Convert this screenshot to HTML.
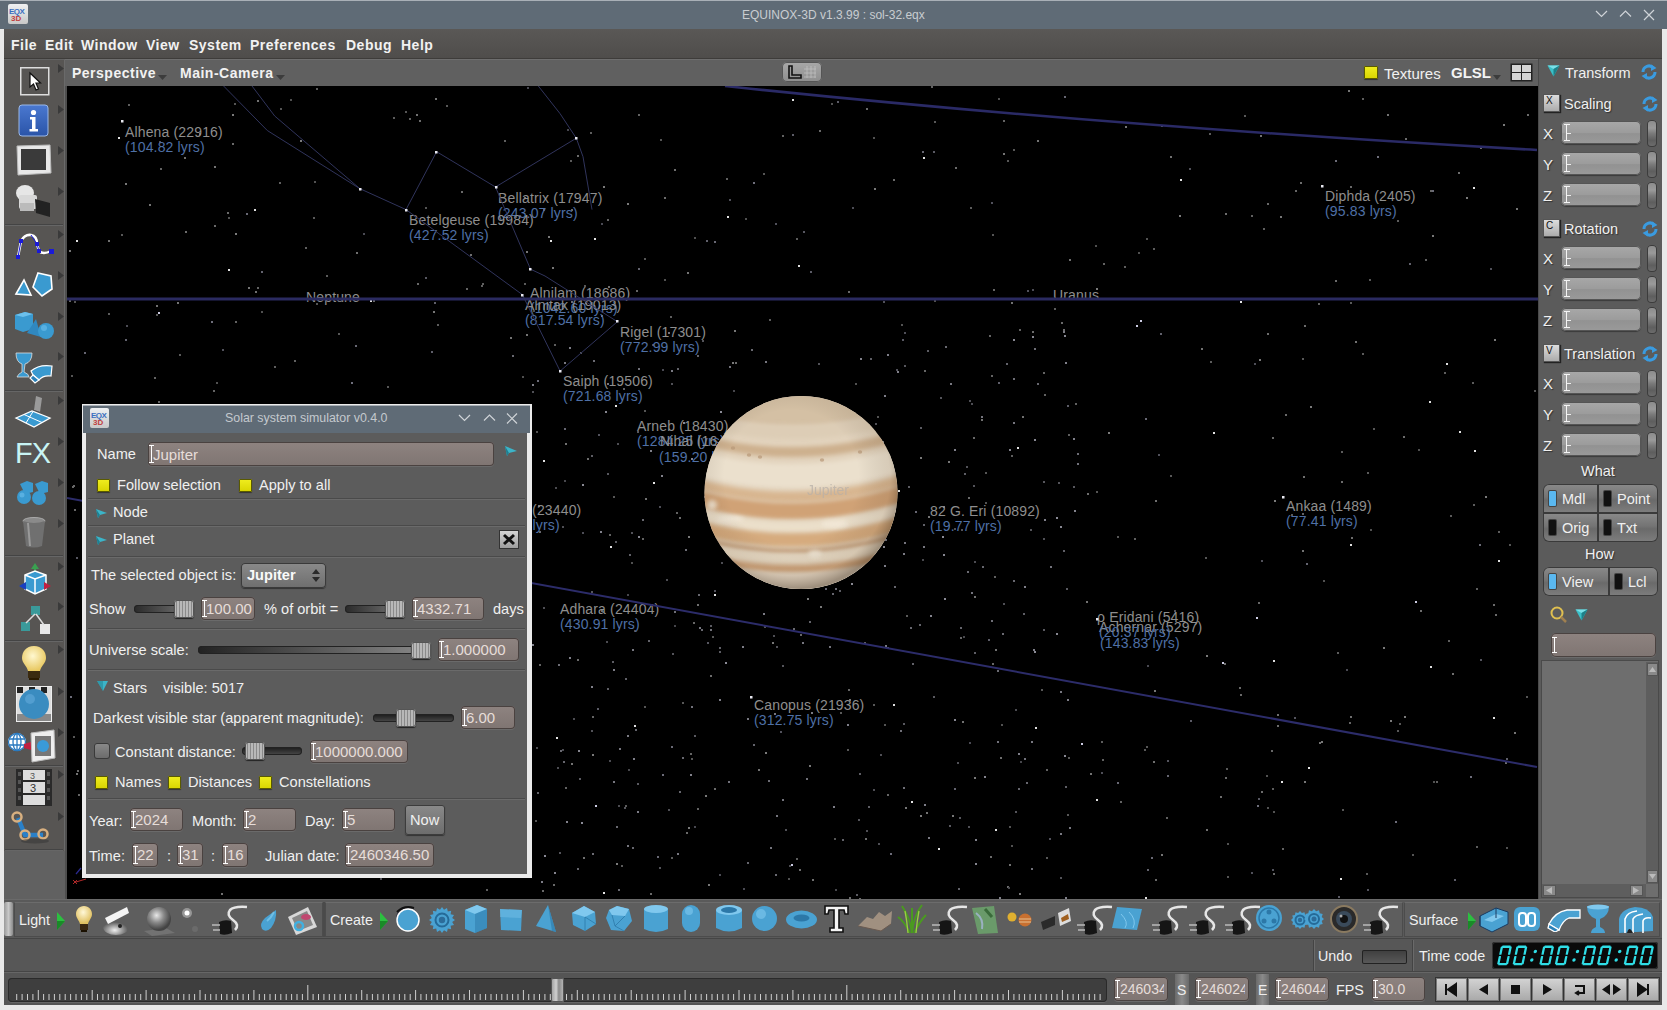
<!DOCTYPE html>
<html><head><meta charset="utf-8">
<style>
*{box-sizing:border-box}
html,body{margin:0;padding:0}
body{width:1667px;height:1010px;overflow:hidden;position:relative;background:#ebebeb;font-family:"Liberation Sans",sans-serif;color:#eee}
.a{position:absolute}
.t{position:absolute;white-space:nowrap;line-height:1}
.b{font-weight:bold}
.fld{position:absolute;border-radius:4px;background:linear-gradient(#8e8380,#7f7572);box-shadow:inset 0 0 0 1px #4a4240, 0 1px 0 #6a6a6a;color:#e6ddd9;font-size:15px;line-height:1}
.fld i{position:absolute;left:3px;top:3px;bottom:3px;width:5px;border-left:1px solid #fff;}
.fld i:before,.fld i:after{content:"";position:absolute;left:-3px;width:5px;height:1px;background:#fff;top:0}
.fld i:after{top:auto;bottom:0}
.fld span{position:absolute;left:5px;top:4px}
.rfld{position:absolute;border-radius:5px;background:linear-gradient(#a8a8a8,#9c9c9c 50%,#929292 55%,#9a9a9a);box-shadow:inset 0 0 0 1px #555,0 1px 1px #3a3a3a}
.rfld i{position:absolute;left:5px;top:3px;bottom:3px;border-left:1px solid #f4f4f4}
.rfld i:before,.rfld i:after{content:"";position:absolute;left:-3px;width:6px;height:1px;background:#f4f4f4;top:0}
.rfld i:after{top:auto;bottom:0}
.rfld b{position:absolute;left:6px;top:50%;width:4px;height:1px;background:#eee}
.knobv{position:absolute;border-radius:4px;background:linear-gradient(#8a8a8a,#9a9a9a 30%,#7a7a7a 50%,#5e5e5e 75%,#6e6e6e);box-shadow:inset 0 0 0 1px #3c3c3c}
.sep{position:absolute;height:1px;background:#4a4a4a;box-shadow:0 1px 0 #6a6a6a}
.cb{position:absolute;width:13px;height:13px;background:linear-gradient(#f0ee20,#d8d400);box-shadow:inset 0 0 0 1px #5a5a00,0 1px 1px #333;border-radius:1px}
.track{position:absolute;height:8px;border-radius:4px;background:linear-gradient(90deg,#2a2a2a,#7a7a7a);box-shadow:inset 0 0 0 1px #222}
.knob{position:absolute;border-radius:3px;background:repeating-linear-gradient(90deg,#b8b8b8 0 2px,#8a8a8a 2px 3px);box-shadow:inset 0 0 0 1px #555, 0 1px 1px #222}
.lbl{position:absolute;white-space:nowrap;line-height:1;font-size:14px;color:#8e8e8e;letter-spacing:0.15px}
.dst{color:#4f70a6}
.ico{position:absolute}
</style></head><body>

<!-- title bar -->
<div class="a" style="left:0;top:0;width:1667px;height:29px;background:#5f6b76;border-top:1px solid #a9b0b7"></div>
<div class="a" style="left:8px;top:4px;width:20px;height:20px;background:linear-gradient(#eef0f2,#c8c8c8);border-radius:2px"></div>
<div class="t" style="left:9px;top:8px;font-size:8px;font-weight:bold;color:#3a6fc0;letter-spacing:-0.5px">EQX</div>
<div class="t" style="left:11px;top:15px;font-size:8px;font-weight:bold;color:#c04040">3D</div>
<div class="t" style="left:742px;top:9px;font-size:12px;color:#c9cdd1">EQUINOX-3D v1.3.99 : sol-32.eqx</div>
<svg class="a" style="left:1590px;top:6px" width="72" height="18" viewBox="0 0 72 18" fill="none" stroke="#d0d4d8" stroke-width="1.2">
<path d="M6 5 L11.5 10.5 L17 5"/><path d="M30 10.5 L35.5 5 L41 10.5"/><path d="M54 4 L64 14 M64 4 L54 14"/>
</svg>
<!-- window frame -->
<div class="a" style="left:0;top:29px;width:4px;height:981px;background:#e9e9e9"></div>
<div class="a" style="left:1662px;top:29px;width:5px;height:981px;background:#e9e9e9"></div>
<div class="a" style="left:0;top:1005px;width:1667px;height:5px;background:#e9e9e9"></div>
<!-- menu bar -->
<div class="a" style="left:4px;top:29px;width:1658px;height:30px;background:linear-gradient(#5a5856,#4f4d4b);border-bottom:1px solid #3e3c3a"></div>
<div class="t b" style="left:11px;top:38px;font-size:14px;color:#f2f2f2;letter-spacing:0.5px;word-spacing:2px">File</div>
<div class="t b" style="left:45px;top:38px;font-size:14px;color:#f2f2f2;letter-spacing:0.5px">Edit</div>
<div class="t b" style="left:81px;top:38px;font-size:14px;color:#f2f2f2;letter-spacing:0.5px">Window</div>
<div class="t b" style="left:146px;top:38px;font-size:14px;color:#f2f2f2;letter-spacing:0.5px">View</div>
<div class="t b" style="left:189px;top:38px;font-size:14px;color:#f2f2f2;letter-spacing:0.5px">System</div>
<div class="t b" style="left:250px;top:38px;font-size:14px;color:#f2f2f2;letter-spacing:0.5px">Preferences</div>
<div class="t b" style="left:346px;top:38px;font-size:14px;color:#f2f2f2;letter-spacing:0.5px">Debug</div>
<div class="t b" style="left:401px;top:38px;font-size:14px;color:#f2f2f2;letter-spacing:0.5px">Help</div>
<!-- left toolbar bg -->
<div class="a" style="left:4px;top:59px;width:61px;height:841px;background:#575553;border-right:1px solid #6a6a6a;border-top:1px solid #626262"></div>
<!-- viewport header -->
<div class="a" style="left:65px;top:59px;width:1473px;height:27px;background:#606060;border-top:1px solid #6e6e6e"></div>
<div class="t b" style="left:72px;top:66px;font-size:14px;color:#f2f2f2;letter-spacing:0.5px">Perspective</div>
<svg class="a" style="left:158px;top:75px" width="9" height="6"><path d="M0 0H9L4.5 5Z" fill="#3c3c3c"/></svg>
<div class="t b" style="left:180px;top:66px;font-size:14px;color:#f2f2f2;letter-spacing:0.5px">Main-Camera</div>
<svg class="a" style="left:276px;top:75px" width="9" height="6"><path d="M0 0H9L4.5 5Z" fill="#3c3c3c"/></svg>
<div class="a" style="left:782px;top:62px;width:40px;height:20px;border-radius:5px;background:linear-gradient(#a8a8a8,#8e8e8e);box-shadow:inset 0 0 0 1px #555"></div>
<svg class="a" style="left:788px;top:65px" width="30" height="14"><path d="M1 1V13H13V10H4V1Z" fill="none" stroke="#111" stroke-width="1.6"/><g stroke="#c8c8c8" stroke-width="0.8" opacity="0.8"><path d="M16 4H28M16 8H28M16 12H28M19 1V13M23 1V13M27 1V13"/></g></svg>
<div class="cb" style="left:1364px;top:66px;width:14px;height:13px"></div>
<div class="t" style="left:1384px;top:66px;font-size:15px;color:#f0f0f0">Textures</div>
<div class="t b" style="left:1451px;top:65px;font-size:15px;color:#f4f4f4">GLSL</div>
<svg class="a" style="left:1493px;top:75px" width="8" height="5"><path d="M0 0H8L4 5Z" fill="#3c3c3c"/></svg>
<svg class="a" style="left:1510px;top:63px" width="23" height="19"><rect x="0.5" y="0.5" width="22" height="18" fill="#222"/><rect x="2" y="2" width="9" height="7" fill="#d4d4d4"/><rect x="12" y="2" width="9" height="7" fill="#d4d4d4"/><rect x="2" y="10" width="9" height="7" fill="#d4d4d4"/><rect x="12" y="10" width="9" height="7" fill="#d4d4d4"/></svg>
<!-- right panel bg -->
<div class="a" style="left:65px;top:86px;width:2px;height:813px;background:#4e4e4e"></div>
<div class="a" style="left:1538px;top:59px;width:124px;height:841px;background:#5b5b5b;border-left:1px solid #4a4a4a"></div>
<!-- bottom rows -->
<div class="a" style="left:4px;top:899px;width:1658px;height:40px;background:#5a5a5a;border-top:1px solid #6a6a6a;border-bottom:1px solid #454545"></div>
<div class="a" style="left:4px;top:939px;width:1658px;height:33px;background:#575757;border-bottom:1px solid #454545"></div>
<div class="a" style="left:4px;top:972px;width:1658px;height:33px;background:#555;border-top:1px solid #666"></div>

<div class="a" style="left:67px;top:86px;width:1471px;height:813px;background:#000;overflow:hidden">
<svg class="a" style="left:0;top:0" width="1471" height="813" viewBox="67 86 1471 813">
<rect x="543" y="209" width="2" height="2" fill="rgb(100,100,112)"/><rect x="855" y="383" width="2" height="2" fill="rgb(82,82,82)"/><rect x="122" y="439" width="2" height="2" fill="rgb(74,74,83)"/><rect x="691" y="758" width="2" height="2" fill="rgb(86,86,86)"/><rect x="990" y="856" width="2" height="2" fill="rgb(108,108,108)"/><rect x="1503" y="124" width="2" height="2" fill="rgb(122,122,122)"/><rect x="279" y="182" width="2" height="2" fill="rgb(95,95,95)"/><rect x="333" y="559" width="2" height="2" fill="rgb(111,111,111)"/><rect x="873" y="137" width="2" height="2" fill="rgb(82,82,82)"/><rect x="1068" y="434" width="2" height="2" fill="rgb(95,95,95)"/><rect x="734" y="330" width="2" height="2" fill="rgb(119,119,119)"/><rect x="426" y="553" width="2" height="2" fill="rgb(106,106,106)"/><rect x="1140" y="320" width="2" height="2" fill="rgb(205,205,228)"/><rect x="682" y="702" width="2" height="2" fill="rgb(87,87,87)"/><rect x="125" y="629" width="2" height="2" fill="rgb(118,118,118)"/><rect x="1355" y="341" width="2" height="2" fill="rgb(114,114,114)"/><rect x="920" y="457" width="2" height="2" fill="rgb(121,121,121)"/><rect x="764" y="626" width="2" height="2" fill="rgb(83,83,83)"/><rect x="1019" y="893" width="2" height="2" fill="rgb(121,121,121)"/><rect x="634" y="630" width="2" height="2" fill="rgb(81,81,81)"/><rect x="314" y="181" width="2" height="2" fill="rgb(82,82,82)"/><rect x="257" y="287" width="2" height="2" fill="rgb(99,99,99)"/><rect x="186" y="451" width="2" height="2" fill="rgb(107,107,107)"/><rect x="1272" y="788" width="2" height="2" fill="rgb(93,93,93)"/><rect x="595" y="805" width="2" height="2" fill="rgb(204,204,227)"/><rect x="326" y="275" width="2" height="2" fill="rgb(91,91,91)"/><rect x="934" y="300" width="2" height="2" fill="rgb(80,80,80)"/><rect x="610" y="546" width="2" height="2" fill="rgb(226,226,226)"/><rect x="825" y="588" width="2" height="2" fill="rgb(101,101,113)"/><rect x="1390" y="720" width="2" height="2" fill="rgb(123,123,123)"/><rect x="644" y="410" width="2" height="2" fill="rgb(85,85,85)"/><rect x="159" y="141" width="2" height="2" fill="rgb(81,81,90)"/><rect x="567" y="129" width="2" height="2" fill="rgb(72,72,80)"/><rect x="216" y="382" width="2" height="2" fill="rgb(81,81,81)"/><rect x="970" y="207" width="2" height="2" fill="rgb(92,92,92)"/><rect x="603" y="186" width="2" height="2" fill="rgb(122,122,122)"/><rect x="752" y="479" width="2" height="2" fill="rgb(75,75,84)"/><rect x="571" y="301" width="2" height="2" fill="rgb(108,108,121)"/><rect x="101" y="859" width="2" height="2" fill="rgb(95,95,106)"/><rect x="866" y="108" width="2" height="2" fill="rgb(106,106,106)"/><rect x="1337" y="652" width="2" height="2" fill="rgb(93,93,93)"/><rect x="313" y="714" width="2" height="2" fill="rgb(106,106,106)"/><rect x="552" y="267" width="2" height="2" fill="rgb(120,120,120)"/><rect x="1321" y="741" width="2" height="2" fill="rgb(120,120,120)"/><rect x="401" y="507" width="2" height="2" fill="rgb(87,87,97)"/><rect x="108" y="313" width="2" height="2" fill="rgb(92,92,92)"/><rect x="1474" y="450" width="2" height="2" fill="rgb(225,225,225)"/><rect x="1472" y="382" width="2" height="2" fill="rgb(91,91,91)"/><rect x="356" y="252" width="2" height="2" fill="rgb(111,111,111)"/><rect x="1303" y="476" width="2" height="2" fill="rgb(112,112,112)"/><rect x="192" y="623" width="2" height="2" fill="rgb(223,223,223)"/><rect x="1170" y="475" width="2" height="2" fill="rgb(88,88,88)"/><rect x="556" y="737" width="2" height="2" fill="rgb(228,228,228)"/><rect x="657" y="856" width="2" height="2" fill="rgb(104,104,116)"/><rect x="254" y="209" width="2" height="2" fill="rgb(223,223,223)"/><rect x="282" y="758" width="2" height="2" fill="rgb(228,228,228)"/><rect x="582" y="532" width="2" height="2" fill="rgb(77,77,86)"/><rect x="1495" y="614" width="2" height="2" fill="rgb(106,106,106)"/><rect x="705" y="795" width="2" height="2" fill="rgb(121,121,121)"/><rect x="437" y="324" width="2" height="2" fill="rgb(92,92,92)"/><rect x="449" y="427" width="2" height="2" fill="rgb(86,86,86)"/><rect x="587" y="458" width="2" height="2" fill="rgb(109,109,109)"/><rect x="686" y="832" width="2" height="2" fill="rgb(105,105,105)"/><rect x="837" y="101" width="2" height="2" fill="rgb(91,91,102)"/><rect x="73" y="736" width="2" height="2" fill="rgb(88,88,88)"/><rect x="1134" y="538" width="2" height="2" fill="rgb(96,96,96)"/><rect x="884" y="724" width="2" height="2" fill="rgb(85,85,85)"/><rect x="433" y="311" width="2" height="2" fill="rgb(118,118,118)"/><rect x="893" y="704" width="2" height="2" fill="rgb(223,223,223)"/><rect x="968" y="497" width="2" height="2" fill="rgb(105,105,105)"/><rect x="732" y="520" width="2" height="2" fill="rgb(103,103,103)"/><rect x="1096" y="799" width="2" height="2" fill="rgb(225,225,225)"/><rect x="890" y="853" width="2" height="2" fill="rgb(108,108,121)"/><rect x="246" y="445" width="2" height="2" fill="rgb(83,83,83)"/><rect x="175" y="630" width="2" height="2" fill="rgb(119,119,119)"/><rect x="294" y="668" width="2" height="2" fill="rgb(101,101,113)"/><rect x="1366" y="873" width="2" height="2" fill="rgb(90,90,90)"/><rect x="653" y="482" width="2" height="2" fill="rgb(229,229,229)"/><rect x="305" y="437" width="2" height="2" fill="rgb(105,105,105)"/><rect x="355" y="345" width="2" height="2" fill="rgb(104,104,116)"/><rect x="882" y="444" width="2" height="2" fill="rgb(80,80,80)"/><rect x="985" y="502" width="2" height="2" fill="rgb(83,83,83)"/><rect x="1227" y="876" width="2" height="2" fill="rgb(85,85,85)"/><rect x="125" y="719" width="2" height="2" fill="rgb(83,83,93)"/><rect x="688" y="827" width="2" height="2" fill="rgb(120,120,120)"/><rect x="287" y="833" width="2" height="2" fill="rgb(108,108,108)"/><rect x="199" y="133" width="2" height="2" fill="rgb(114,114,114)"/><rect x="174" y="849" width="2" height="2" fill="rgb(111,111,111)"/><rect x="190" y="782" width="2" height="2" fill="rgb(83,83,83)"/><rect x="735" y="362" width="2" height="2" fill="rgb(107,107,107)"/><rect x="461" y="191" width="2" height="2" fill="rgb(106,106,106)"/><rect x="228" y="217" width="2" height="2" fill="rgb(82,82,82)"/><rect x="526" y="334" width="2" height="2" fill="rgb(117,117,117)"/><rect x="803" y="231" width="2" height="2" fill="rgb(87,87,97)"/><rect x="435" y="98" width="2" height="2" fill="rgb(116,116,116)"/><rect x="346" y="472" width="2" height="2" fill="rgb(202,202,225)"/><rect x="1272" y="437" width="2" height="2" fill="rgb(104,104,104)"/><rect x="645" y="498" width="2" height="2" fill="rgb(114,114,114)"/><rect x="571" y="763" width="2" height="2" fill="rgb(115,115,115)"/><rect x="662" y="369" width="2" height="2" fill="rgb(73,73,82)"/><rect x="171" y="688" width="2" height="2" fill="rgb(82,82,92)"/><rect x="191" y="770" width="2" height="2" fill="rgb(123,123,123)"/><rect x="482" y="283" width="2" height="2" fill="rgb(94,94,94)"/><rect x="299" y="448" width="2" height="2" fill="rgb(93,93,93)"/><rect x="1498" y="531" width="2" height="2" fill="rgb(92,92,92)"/><rect x="522" y="376" width="2" height="2" fill="rgb(80,80,80)"/><rect x="765" y="495" width="2" height="2" fill="rgb(90,90,90)"/><rect x="74" y="301" width="2" height="2" fill="rgb(84,84,84)"/><rect x="128" y="104" width="2" height="2" fill="rgb(95,95,95)"/><rect x="928" y="516" width="2" height="2" fill="rgb(117,117,117)"/><rect x="1120" y="801" width="2" height="2" fill="rgb(99,99,99)"/><rect x="1516" y="208" width="2" height="2" fill="rgb(116,116,116)"/><rect x="131" y="765" width="2" height="2" fill="rgb(124,124,124)"/><rect x="1146" y="746" width="2" height="2" fill="rgb(86,86,86)"/><rect x="809" y="765" width="2" height="2" fill="rgb(120,120,120)"/><rect x="926" y="812" width="2" height="2" fill="rgb(114,114,114)"/><rect x="405" y="111" width="2" height="2" fill="rgb(86,86,86)"/><rect x="221" y="766" width="2" height="2" fill="rgb(107,107,107)"/><rect x="988" y="639" width="2" height="2" fill="rgb(93,93,104)"/><rect x="1240" y="694" width="2" height="2" fill="rgb(105,105,105)"/><rect x="1037" y="140" width="2" height="2" fill="rgb(116,116,116)"/><rect x="177" y="302" width="2" height="2" fill="rgb(116,116,116)"/><rect x="1155" y="879" width="2" height="2" fill="rgb(104,104,104)"/><rect x="772" y="642" width="2" height="2" fill="rgb(118,118,118)"/><rect x="1013" y="149" width="2" height="2" fill="rgb(87,87,87)"/><rect x="1160" y="333" width="2" height="2" fill="rgb(97,97,108)"/><rect x="156" y="305" width="2" height="2" fill="rgb(113,113,113)"/><rect x="1061" y="322" width="2" height="2" fill="rgb(105,105,105)"/><rect x="753" y="182" width="2" height="2" fill="rgb(111,111,124)"/><rect x="1506" y="847" width="2" height="2" fill="rgb(80,80,80)"/><rect x="1273" y="873" width="2" height="2" fill="rgb(102,102,102)"/><rect x="376" y="855" width="2" height="2" fill="rgb(90,90,90)"/><rect x="276" y="512" width="2" height="2" fill="rgb(203,203,226)"/><rect x="1274" y="500" width="2" height="2" fill="rgb(124,124,124)"/><rect x="407" y="816" width="2" height="2" fill="rgb(93,93,104)"/><rect x="72" y="486" width="2" height="2" fill="rgb(102,102,102)"/><rect x="274" y="366" width="2" height="2" fill="rgb(95,95,95)"/><rect x="70" y="696" width="2" height="2" fill="rgb(108,108,121)"/><rect x="1430" y="666" width="2" height="2" fill="rgb(223,223,223)"/><rect x="615" y="405" width="2" height="2" fill="rgb(229,229,229)"/><rect x="598" y="434" width="2" height="2" fill="rgb(83,83,93)"/><rect x="217" y="765" width="2" height="2" fill="rgb(94,94,94)"/><rect x="434" y="302" width="2" height="2" fill="rgb(94,94,105)"/><rect x="616" y="863" width="2" height="2" fill="rgb(124,124,124)"/><rect x="995" y="829" width="2" height="2" fill="rgb(225,225,225)"/><rect x="1125" y="126" width="2" height="2" fill="rgb(116,116,116)"/><rect x="1174" y="610" width="2" height="2" fill="rgb(84,84,94)"/><rect x="1430" y="190" width="2" height="2" fill="rgb(103,103,103)"/><rect x="505" y="687" width="2" height="2" fill="rgb(228,228,228)"/><rect x="1032" y="331" width="2" height="2" fill="rgb(107,107,107)"/><rect x="313" y="217" width="2" height="2" fill="rgb(90,90,90)"/><rect x="798" y="265" width="2" height="2" fill="rgb(223,223,223)"/><rect x="729" y="199" width="2" height="2" fill="rgb(80,80,89)"/><rect x="570" y="160" width="2" height="2" fill="rgb(91,91,91)"/><rect x="905" y="807" width="2" height="2" fill="rgb(117,117,117)"/><rect x="676" y="512" width="2" height="2" fill="rgb(98,98,98)"/><rect x="158" y="312" width="2" height="2" fill="rgb(204,204,227)"/><rect x="807" y="598" width="2" height="2" fill="rgb(123,123,123)"/><rect x="466" y="288" width="2" height="2" fill="rgb(99,99,99)"/><rect x="1470" y="776" width="2" height="2" fill="rgb(110,110,123)"/><rect x="114" y="663" width="2" height="2" fill="rgb(124,124,124)"/><rect x="931" y="86" width="2" height="2" fill="rgb(99,99,99)"/><rect x="1281" y="781" width="2" height="2" fill="rgb(228,228,228)"/><rect x="227" y="212" width="2" height="2" fill="rgb(106,106,106)"/><rect x="1452" y="673" width="2" height="2" fill="rgb(112,112,112)"/><rect x="740" y="534" width="2" height="2" fill="rgb(81,81,81)"/><rect x="409" y="834" width="2" height="2" fill="rgb(112,112,112)"/><rect x="255" y="291" width="2" height="2" fill="rgb(111,111,111)"/><rect x="232" y="143" width="2" height="2" fill="rgb(106,106,106)"/><rect x="638" y="268" width="2" height="2" fill="rgb(99,99,110)"/><rect x="511" y="461" width="2" height="2" fill="rgb(227,227,227)"/><rect x="1367" y="472" width="2" height="2" fill="rgb(91,91,91)"/><rect x="1480" y="659" width="2" height="2" fill="rgb(85,85,95)"/><rect x="800" y="634" width="2" height="2" fill="rgb(101,101,101)"/><rect x="1049" y="838" width="2" height="2" fill="rgb(81,81,91)"/><rect x="564" y="428" width="2" height="2" fill="rgb(102,102,114)"/><rect x="1239" y="687" width="2" height="2" fill="rgb(105,105,105)"/><rect x="1494" y="339" width="2" height="2" fill="rgb(121,121,121)"/><rect x="393" y="704" width="2" height="2" fill="rgb(94,94,94)"/><rect x="796" y="238" width="2" height="2" fill="rgb(91,91,91)"/><rect x="1046" y="857" width="2" height="2" fill="rgb(87,87,87)"/><rect x="380" y="878" width="2" height="2" fill="rgb(78,78,87)"/><rect x="155" y="406" width="2" height="2" fill="rgb(124,124,124)"/><rect x="1145" y="897" width="2" height="2" fill="rgb(225,225,225)"/><rect x="340" y="847" width="2" height="2" fill="rgb(105,105,117)"/><rect x="1044" y="394" width="2" height="2" fill="rgb(98,98,98)"/><rect x="316" y="88" width="2" height="2" fill="rgb(93,93,93)"/><rect x="1473" y="187" width="2" height="2" fill="rgb(227,227,227)"/><rect x="592" y="754" width="2" height="2" fill="rgb(121,121,121)"/><rect x="139" y="471" width="2" height="2" fill="rgb(98,98,98)"/><rect x="351" y="382" width="2" height="2" fill="rgb(111,111,124)"/><rect x="671" y="746" width="2" height="2" fill="rgb(106,106,118)"/><rect x="118" y="137" width="2" height="2" fill="rgb(224,224,224)"/><rect x="1166" y="817" width="2" height="2" fill="rgb(96,96,96)"/><rect x="1476" y="588" width="2" height="2" fill="rgb(93,93,93)"/><rect x="533" y="310" width="2" height="2" fill="rgb(80,80,80)"/><rect x="1415" y="601" width="2" height="2" fill="rgb(203,203,226)"/><rect x="411" y="472" width="2" height="2" fill="rgb(226,226,226)"/><rect x="636" y="290" width="2" height="2" fill="rgb(101,101,101)"/><rect x="1432" y="235" width="2" height="2" fill="rgb(120,120,120)"/><rect x="1277" y="714" width="2" height="2" fill="rgb(110,110,110)"/><rect x="537" y="380" width="2" height="2" fill="rgb(107,107,119)"/><rect x="357" y="698" width="2" height="2" fill="rgb(82,82,92)"/><rect x="117" y="535" width="2" height="2" fill="rgb(96,96,96)"/><rect x="1367" y="889" width="2" height="2" fill="rgb(83,83,93)"/><rect x="209" y="491" width="2" height="2" fill="rgb(115,115,115)"/><rect x="412" y="425" width="2" height="2" fill="rgb(111,111,111)"/><rect x="1167" y="775" width="2" height="2" fill="rgb(101,101,113)"/><rect x="1304" y="325" width="2" height="2" fill="rgb(108,108,108)"/><rect x="1153" y="248" width="2" height="2" fill="rgb(92,92,92)"/><rect x="293" y="805" width="2" height="2" fill="rgb(108,108,108)"/><rect x="650" y="893" width="2" height="2" fill="rgb(105,105,105)"/><rect x="1256" y="617" width="2" height="2" fill="rgb(206,206,229)"/><rect x="765" y="752" width="2" height="2" fill="rgb(122,122,122)"/><rect x="126" y="325" width="2" height="2" fill="rgb(76,76,85)"/><rect x="1498" y="560" width="2" height="2" fill="rgb(225,225,225)"/><rect x="1341" y="451" width="2" height="2" fill="rgb(92,92,92)"/><rect x="1458" y="172" width="2" height="2" fill="rgb(109,109,109)"/><rect x="387" y="386" width="2" height="2" fill="rgb(87,87,87)"/><rect x="442" y="573" width="2" height="2" fill="rgb(112,112,112)"/><rect x="84" y="352" width="2" height="2" fill="rgb(101,101,113)"/><rect x="526" y="251" width="2" height="2" fill="rgb(119,119,119)"/><rect x="160" y="168" width="2" height="2" fill="rgb(99,99,99)"/><rect x="1007" y="160" width="2" height="2" fill="rgb(88,88,88)"/><rect x="670" y="316" width="2" height="2" fill="rgb(95,95,95)"/><rect x="526" y="547" width="2" height="2" fill="rgb(97,97,97)"/><rect x="1338" y="896" width="2" height="2" fill="rgb(88,88,98)"/><rect x="1138" y="252" width="2" height="2" fill="rgb(80,80,80)"/><rect x="690" y="753" width="2" height="2" fill="rgb(100,100,100)"/><rect x="745" y="218" width="2" height="2" fill="rgb(80,80,80)"/><rect x="1009" y="826" width="2" height="2" fill="rgb(84,84,84)"/><rect x="613" y="496" width="2" height="2" fill="rgb(87,87,87)"/><rect x="834" y="838" width="2" height="2" fill="rgb(85,85,85)"/><rect x="1251" y="872" width="2" height="2" fill="rgb(80,80,89)"/><rect x="1454" y="879" width="2" height="2" fill="rgb(93,93,104)"/><rect x="1429" y="401" width="2" height="2" fill="rgb(223,223,223)"/><rect x="1280" y="216" width="2" height="2" fill="rgb(119,119,119)"/><rect x="662" y="774" width="2" height="2" fill="rgb(108,108,121)"/><rect x="388" y="411" width="2" height="2" fill="rgb(105,105,105)"/><rect x="248" y="287" width="2" height="2" fill="rgb(116,116,116)"/><rect x="127" y="543" width="2" height="2" fill="rgb(105,105,117)"/><rect x="1300" y="182" width="2" height="2" fill="rgb(109,109,109)"/><rect x="989" y="335" width="2" height="2" fill="rgb(101,101,101)"/><rect x="693" y="622" width="2" height="2" fill="rgb(102,102,102)"/><rect x="101" y="589" width="2" height="2" fill="rgb(104,104,104)"/><rect x="1190" y="720" width="2" height="2" fill="rgb(91,91,102)"/><rect x="763" y="173" width="2" height="2" fill="rgb(86,86,86)"/><rect x="202" y="445" width="2" height="2" fill="rgb(94,94,105)"/><rect x="1003" y="153" width="2" height="2" fill="rgb(116,116,116)"/><rect x="819" y="130" width="2" height="2" fill="rgb(105,105,105)"/><rect x="1466" y="197" width="2" height="2" fill="rgb(122,122,122)"/><rect x="1144" y="749" width="2" height="2" fill="rgb(89,89,89)"/><rect x="791" y="864" width="2" height="2" fill="rgb(201,201,224)"/><rect x="1227" y="843" width="2" height="2" fill="rgb(83,83,83)"/><rect x="1179" y="215" width="2" height="2" fill="rgb(124,124,124)"/><rect x="1267" y="203" width="2" height="2" fill="rgb(105,105,105)"/><rect x="373" y="300" width="2" height="2" fill="rgb(105,105,105)"/><rect x="121" y="234" width="2" height="2" fill="rgb(88,88,88)"/><rect x="1067" y="814" width="2" height="2" fill="rgb(88,88,88)"/><rect x="236" y="517" width="2" height="2" fill="rgb(111,111,111)"/><rect x="1351" y="537" width="2" height="2" fill="rgb(109,109,109)"/><rect x="221" y="893" width="2" height="2" fill="rgb(111,111,111)"/><rect x="1240" y="301" width="2" height="2" fill="rgb(229,229,229)"/><rect x="597" y="708" width="2" height="2" fill="rgb(91,91,102)"/><rect x="1161" y="125" width="2" height="2" fill="rgb(120,120,120)"/><rect x="1007" y="886" width="2" height="2" fill="rgb(109,109,109)"/><rect x="527" y="87" width="2" height="2" fill="rgb(72,72,81)"/><rect x="973" y="437" width="2" height="2" fill="rgb(105,105,105)"/><rect x="261" y="271" width="2" height="2" fill="rgb(100,100,112)"/><rect x="71" y="375" width="2" height="2" fill="rgb(85,85,85)"/><rect x="397" y="560" width="2" height="2" fill="rgb(109,109,109)"/><rect x="985" y="472" width="2" height="2" fill="rgb(86,86,86)"/><rect x="425" y="207" width="2" height="2" fill="rgb(84,84,84)"/><rect x="1349" y="722" width="2" height="2" fill="rgb(100,100,100)"/><rect x="84" y="610" width="2" height="2" fill="rgb(108,108,108)"/><rect x="1017" y="447" width="2" height="2" fill="rgb(225,225,225)"/><rect x="433" y="821" width="2" height="2" fill="rgb(82,82,82)"/><rect x="664" y="279" width="2" height="2" fill="rgb(82,82,82)"/><rect x="85" y="534" width="2" height="2" fill="rgb(202,202,225)"/><rect x="360" y="580" width="2" height="2" fill="rgb(105,105,105)"/><rect x="1263" y="228" width="2" height="2" fill="rgb(95,95,95)"/><rect x="138" y="809" width="2" height="2" fill="rgb(119,119,119)"/><rect x="76" y="773" width="2" height="2" fill="rgb(117,117,117)"/><rect x="1158" y="454" width="2" height="2" fill="rgb(81,81,91)"/><rect x="409" y="118" width="2" height="2" fill="rgb(96,96,96)"/><rect x="1090" y="773" width="2" height="2" fill="rgb(115,115,115)"/><rect x="882" y="441" width="2" height="2" fill="rgb(119,119,119)"/><rect x="457" y="608" width="2" height="2" fill="rgb(227,227,227)"/><rect x="1362" y="98" width="2" height="2" fill="rgb(93,93,93)"/><rect x="1161" y="854" width="2" height="2" fill="rgb(117,117,117)"/><rect x="1362" y="353" width="2" height="2" fill="rgb(91,91,91)"/><rect x="995" y="649" width="2" height="2" fill="rgb(113,113,113)"/><rect x="758" y="769" width="2" height="2" fill="rgb(114,114,114)"/><rect x="710" y="675" width="2" height="2" fill="rgb(108,108,108)"/><rect x="379" y="592" width="2" height="2" fill="rgb(83,83,83)"/><rect x="280" y="108" width="2" height="2" fill="rgb(85,85,85)"/><rect x="574" y="201" width="2" height="2" fill="rgb(72,72,81)"/><rect x="1086" y="601" width="2" height="2" fill="rgb(114,114,114)"/><rect x="164" y="566" width="2" height="2" fill="rgb(98,98,98)"/><rect x="1273" y="811" width="2" height="2" fill="rgb(83,83,83)"/><rect x="1412" y="854" width="2" height="2" fill="rgb(85,85,85)"/><rect x="232" y="114" width="2" height="2" fill="rgb(122,122,122)"/><rect x="1000" y="757" width="2" height="2" fill="rgb(111,111,111)"/><rect x="214" y="166" width="2" height="2" fill="rgb(117,117,117)"/><rect x="536" y="431" width="2" height="2" fill="rgb(81,81,81)"/><rect x="483" y="668" width="2" height="2" fill="rgb(98,98,98)"/><rect x="1485" y="496" width="2" height="2" fill="rgb(122,122,122)"/><rect x="113" y="422" width="2" height="2" fill="rgb(101,101,101)"/><rect x="577" y="659" width="2" height="2" fill="rgb(106,106,106)"/><rect x="1335" y="160" width="2" height="2" fill="rgb(108,108,120)"/><rect x="69" y="250" width="2" height="2" fill="rgb(118,118,118)"/><rect x="73" y="485" width="2" height="2" fill="rgb(104,104,104)"/><rect x="338" y="488" width="2" height="2" fill="rgb(97,97,97)"/><rect x="450" y="853" width="2" height="2" fill="rgb(94,94,94)"/><rect x="1096" y="491" width="2" height="2" fill="rgb(85,85,85)"/><rect x="186" y="727" width="2" height="2" fill="rgb(114,114,114)"/><rect x="991" y="375" width="2" height="2" fill="rgb(100,100,100)"/><rect x="1377" y="156" width="2" height="2" fill="rgb(111,111,124)"/><rect x="370" y="300" width="2" height="2" fill="rgb(223,223,223)"/><rect x="625" y="805" width="2" height="2" fill="rgb(91,91,91)"/><rect x="849" y="699" width="2" height="2" fill="rgb(117,117,117)"/><rect x="580" y="352" width="2" height="2" fill="rgb(87,87,87)"/><rect x="1041" y="689" width="2" height="2" fill="rgb(88,88,88)"/><rect x="1205" y="557" width="2" height="2" fill="rgb(86,86,86)"/><rect x="1369" y="279" width="2" height="2" fill="rgb(89,89,89)"/><rect x="1101" y="772" width="2" height="2" fill="rgb(78,78,87)"/><rect x="431" y="351" width="2" height="2" fill="rgb(95,95,106)"/><rect x="550" y="240" width="2" height="2" fill="rgb(228,228,228)"/><rect x="217" y="868" width="2" height="2" fill="rgb(85,85,85)"/><rect x="1514" y="732" width="2" height="2" fill="rgb(116,116,116)"/><rect x="356" y="605" width="2" height="2" fill="rgb(85,85,85)"/><rect x="638" y="114" width="2" height="2" fill="rgb(99,99,99)"/><rect x="1087" y="493" width="2" height="2" fill="rgb(111,111,111)"/><rect x="276" y="577" width="2" height="2" fill="rgb(100,100,100)"/><rect x="1403" y="436" width="2" height="2" fill="rgb(108,108,108)"/><rect x="687" y="272" width="2" height="2" fill="rgb(116,116,116)"/><rect x="1206" y="655" width="2" height="2" fill="rgb(122,122,122)"/><rect x="1011" y="455" width="2" height="2" fill="rgb(95,95,95)"/><rect x="211" y="427" width="2" height="2" fill="rgb(119,119,119)"/><rect x="993" y="289" width="2" height="2" fill="rgb(101,101,101)"/><rect x="981" y="419" width="2" height="2" fill="rgb(113,113,113)"/><rect x="336" y="618" width="2" height="2" fill="rgb(118,118,118)"/><rect x="788" y="878" width="2" height="2" fill="rgb(81,81,81)"/><rect x="304" y="722" width="2" height="2" fill="rgb(225,225,225)"/><rect x="216" y="553" width="2" height="2" fill="rgb(107,107,107)"/><rect x="820" y="606" width="2" height="2" fill="rgb(121,121,121)"/><rect x="671" y="857" width="2" height="2" fill="rgb(90,90,90)"/><rect x="644" y="706" width="2" height="2" fill="rgb(86,86,86)"/><rect x="590" y="132" width="2" height="2" fill="rgb(93,93,93)"/><rect x="87" y="426" width="2" height="2" fill="rgb(101,101,101)"/><rect x="585" y="302" width="2" height="2" fill="rgb(91,91,91)"/><rect x="1450" y="515" width="2" height="2" fill="rgb(90,90,90)"/><rect x="644" y="258" width="2" height="2" fill="rgb(86,86,86)"/><rect x="1258" y="602" width="2" height="2" fill="rgb(103,103,103)"/><rect x="399" y="870" width="2" height="2" fill="rgb(97,97,97)"/><rect x="1271" y="750" width="2" height="2" fill="rgb(103,103,103)"/><rect x="874" y="188" width="2" height="2" fill="rgb(121,121,121)"/><rect x="1318" y="303" width="2" height="2" fill="rgb(98,98,98)"/><rect x="694" y="237" width="2" height="2" fill="rgb(80,80,80)"/><rect x="481" y="285" width="2" height="2" fill="rgb(95,95,95)"/><rect x="697" y="604" width="2" height="2" fill="rgb(112,112,112)"/><rect x="1433" y="781" width="2" height="2" fill="rgb(82,82,82)"/><rect x="1399" y="723" width="2" height="2" fill="rgb(87,87,87)"/><rect x="998" y="98" width="2" height="2" fill="rgb(80,80,80)"/><rect x="1032" y="289" width="2" height="2" fill="rgb(76,76,85)"/><rect x="411" y="717" width="2" height="2" fill="rgb(87,87,97)"/><rect x="1397" y="730" width="2" height="2" fill="rgb(88,88,88)"/><rect x="962" y="721" width="2" height="2" fill="rgb(113,113,113)"/><rect x="1226" y="768" width="2" height="2" fill="rgb(89,89,89)"/><rect x="848" y="689" width="2" height="2" fill="rgb(101,101,101)"/><rect x="883" y="301" width="2" height="2" fill="rgb(81,81,91)"/><rect x="792" y="134" width="2" height="2" fill="rgb(92,92,103)"/><rect x="790" y="491" width="2" height="2" fill="rgb(106,106,106)"/><rect x="77" y="770" width="2" height="2" fill="rgb(103,103,103)"/><rect x="1046" y="769" width="2" height="2" fill="rgb(98,98,98)"/><rect x="1480" y="147" width="2" height="2" fill="rgb(111,111,111)"/><rect x="109" y="582" width="2" height="2" fill="rgb(114,114,114)"/><rect x="553" y="884" width="2" height="2" fill="rgb(105,105,105)"/><rect x="1387" y="114" width="2" height="2" fill="rgb(115,115,115)"/><rect x="565" y="787" width="2" height="2" fill="rgb(98,98,98)"/><rect x="840" y="712" width="2" height="2" fill="rgb(90,90,90)"/><rect x="688" y="536" width="2" height="2" fill="rgb(121,121,121)"/><rect x="1285" y="414" width="2" height="2" fill="rgb(105,105,105)"/><rect x="812" y="879" width="2" height="2" fill="rgb(112,112,112)"/><rect x="554" y="344" width="2" height="2" fill="rgb(94,94,94)"/><rect x="1001" y="724" width="2" height="2" fill="rgb(82,82,82)"/><rect x="1370" y="529" width="2" height="2" fill="rgb(82,82,82)"/><rect x="76" y="240" width="2" height="2" fill="rgb(224,224,224)"/><rect x="1035" y="727" width="2" height="2" fill="rgb(223,223,223)"/><rect x="974" y="596" width="2" height="2" fill="rgb(114,114,114)"/><rect x="1069" y="259" width="2" height="2" fill="rgb(113,113,113)"/><rect x="1189" y="168" width="2" height="2" fill="rgb(80,80,89)"/><rect x="1206" y="829" width="2" height="2" fill="rgb(112,112,112)"/><rect x="1277" y="725" width="2" height="2" fill="rgb(108,108,108)"/><rect x="511" y="429" width="2" height="2" fill="rgb(95,95,95)"/><rect x="1011" y="845" width="2" height="2" fill="rgb(82,82,82)"/><rect x="125" y="183" width="2" height="2" fill="rgb(120,120,120)"/><rect x="1418" y="449" width="2" height="2" fill="rgb(80,80,80)"/><rect x="938" y="848" width="2" height="2" fill="rgb(228,228,228)"/><rect x="674" y="169" width="2" height="2" fill="rgb(112,112,112)"/><rect x="290" y="99" width="2" height="2" fill="rgb(80,80,80)"/><rect x="246" y="872" width="2" height="2" fill="rgb(84,84,84)"/><rect x="257" y="100" width="2" height="2" fill="rgb(115,115,115)"/><rect x="1146" y="238" width="2" height="2" fill="rgb(82,82,82)"/><rect x="1117" y="782" width="2" height="2" fill="rgb(104,104,116)"/><rect x="992" y="663" width="2" height="2" fill="rgb(103,103,103)"/><rect x="441" y="870" width="2" height="2" fill="rgb(103,103,115)"/><rect x="89" y="615" width="2" height="2" fill="rgb(108,108,120)"/><rect x="525" y="679" width="2" height="2" fill="rgb(88,88,88)"/><rect x="782" y="135" width="2" height="2" fill="rgb(98,98,98)"/><rect x="712" y="636" width="2" height="2" fill="rgb(87,87,87)"/><rect x="601" y="610" width="2" height="2" fill="rgb(111,111,111)"/><rect x="634" y="725" width="2" height="2" fill="rgb(226,226,226)"/><rect x="901" y="324" width="2" height="2" fill="rgb(83,83,83)"/><rect x="1102" y="759" width="2" height="2" fill="rgb(96,96,96)"/><rect x="1505" y="762" width="2" height="2" fill="rgb(110,110,110)"/><rect x="697" y="808" width="2" height="2" fill="rgb(98,98,98)"/><rect x="952" y="815" width="2" height="2" fill="rgb(120,120,120)"/><rect x="69" y="300" width="2" height="2" fill="rgb(101,101,101)"/><rect x="1267" y="807" width="2" height="2" fill="rgb(82,82,82)"/><rect x="1261" y="791" width="2" height="2" fill="rgb(108,108,108)"/><rect x="1319" y="742" width="2" height="2" fill="rgb(114,114,114)"/><rect x="577" y="155" width="2" height="2" fill="rgb(107,107,107)"/><rect x="362" y="696" width="2" height="2" fill="rgb(225,225,225)"/><rect x="960" y="637" width="2" height="2" fill="rgb(103,103,103)"/><rect x="442" y="697" width="2" height="2" fill="rgb(119,119,119)"/><rect x="196" y="742" width="2" height="2" fill="rgb(118,118,118)"/><rect x="920" y="815" width="2" height="2" fill="rgb(124,124,124)"/><rect x="768" y="565" width="2" height="2" fill="rgb(80,80,89)"/><rect x="333" y="656" width="2" height="2" fill="rgb(98,98,98)"/><rect x="659" y="506" width="2" height="2" fill="rgb(78,78,87)"/><rect x="1534" y="390" width="2" height="2" fill="rgb(85,85,85)"/><rect x="1225" y="213" width="2" height="2" fill="rgb(109,109,109)"/><rect x="831" y="103" width="2" height="2" fill="rgb(81,81,81)"/><rect x="1341" y="481" width="2" height="2" fill="rgb(108,108,108)"/><rect x="1213" y="432" width="2" height="2" fill="rgb(226,226,226)"/><rect x="1272" y="869" width="2" height="2" fill="rgb(82,82,92)"/><rect x="363" y="233" width="2" height="2" fill="rgb(75,75,84)"/><rect x="887" y="794" width="2" height="2" fill="rgb(102,102,102)"/><rect x="1405" y="138" width="2" height="2" fill="rgb(109,109,109)"/><rect x="243" y="866" width="2" height="2" fill="rgb(92,92,92)"/><rect x="1009" y="864" width="2" height="2" fill="rgb(113,113,113)"/><rect x="727" y="216" width="2" height="2" fill="rgb(227,227,227)"/><rect x="393" y="117" width="2" height="2" fill="rgb(92,92,92)"/><rect x="1395" y="821" width="2" height="2" fill="rgb(108,108,121)"/><rect x="1224" y="663" width="2" height="2" fill="rgb(112,112,112)"/><rect x="149" y="204" width="2" height="2" fill="rgb(117,117,117)"/><rect x="1063" y="329" width="2" height="2" fill="rgb(109,109,109)"/><rect x="222" y="349" width="2" height="2" fill="rgb(82,82,92)"/><rect x="775" y="223" width="2" height="2" fill="rgb(81,81,91)"/><rect x="1064" y="96" width="2" height="2" fill="rgb(103,103,115)"/><rect x="120" y="840" width="2" height="2" fill="rgb(91,91,91)"/><rect x="1342" y="809" width="2" height="2" fill="rgb(86,86,86)"/><rect x="210" y="841" width="2" height="2" fill="rgb(122,122,122)"/><rect x="732" y="362" width="2" height="2" fill="rgb(121,121,121)"/><rect x="991" y="202" width="2" height="2" fill="rgb(81,81,91)"/><rect x="1117" y="536" width="2" height="2" fill="rgb(87,87,87)"/><rect x="459" y="421" width="2" height="2" fill="rgb(87,87,87)"/><rect x="1302" y="358" width="2" height="2" fill="rgb(88,88,88)"/><rect x="535" y="820" width="2" height="2" fill="rgb(85,85,85)"/><rect x="151" y="814" width="2" height="2" fill="rgb(113,113,113)"/><rect x="769" y="319" width="2" height="2" fill="rgb(92,92,92)"/><rect x="603" y="892" width="2" height="2" fill="rgb(229,229,229)"/><rect x="211" y="321" width="2" height="2" fill="rgb(111,111,124)"/><rect x="1136" y="325" width="2" height="2" fill="rgb(205,205,228)"/><rect x="1254" y="363" width="2" height="2" fill="rgb(78,78,87)"/><rect x="1291" y="514" width="2" height="2" fill="rgb(89,89,89)"/><rect x="1409" y="263" width="2" height="2" fill="rgb(97,97,108)"/><rect x="332" y="712" width="2" height="2" fill="rgb(103,103,115)"/><rect x="184" y="157" width="2" height="2" fill="rgb(110,110,110)"/><rect x="470" y="254" width="2" height="2" fill="rgb(110,110,110)"/><rect x="1261" y="560" width="2" height="2" fill="rgb(81,81,90)"/><rect x="1145" y="418" width="2" height="2" fill="rgb(104,104,116)"/><rect x="1259" y="359" width="2" height="2" fill="rgb(122,122,122)"/><rect x="792" y="99" width="2" height="2" fill="rgb(223,223,223)"/><rect x="1350" y="302" width="2" height="2" fill="rgb(89,89,89)"/><rect x="607" y="219" width="2" height="2" fill="rgb(98,98,98)"/><rect x="74" y="509" width="2" height="2" fill="rgb(102,102,102)"/><rect x="245" y="667" width="2" height="2" fill="rgb(120,120,120)"/><rect x="539" y="664" width="2" height="2" fill="rgb(99,99,99)"/><rect x="157" y="796" width="2" height="2" fill="rgb(226,226,226)"/><rect x="822" y="517" width="2" height="2" fill="rgb(95,95,106)"/><rect x="1490" y="268" width="2" height="2" fill="rgb(80,80,89)"/><rect x="435" y="750" width="2" height="2" fill="rgb(72,72,81)"/><rect x="1095" y="245" width="2" height="2" fill="rgb(80,80,80)"/><rect x="915" y="511" width="2" height="2" fill="rgb(103,103,115)"/><rect x="1346" y="669" width="2" height="2" fill="rgb(73,73,82)"/><rect x="793" y="493" width="2" height="2" fill="rgb(83,83,93)"/><rect x="664" y="197" width="2" height="2" fill="rgb(109,109,109)"/><rect x="284" y="552" width="2" height="2" fill="rgb(105,105,117)"/><rect x="1282" y="848" width="2" height="2" fill="rgb(99,99,99)"/><rect x="1302" y="513" width="2" height="2" fill="rgb(99,99,99)"/><rect x="1210" y="361" width="2" height="2" fill="rgb(92,92,92)"/><rect x="708" y="884" width="2" height="2" fill="rgb(120,120,120)"/><rect x="1266" y="775" width="2" height="2" fill="rgb(82,82,82)"/><rect x="1476" y="846" width="2" height="2" fill="rgb(92,92,92)"/><rect x="998" y="382" width="2" height="2" fill="rgb(95,95,106)"/><rect x="704" y="496" width="2" height="2" fill="rgb(72,72,81)"/><rect x="1493" y="717" width="2" height="2" fill="rgb(225,225,225)"/><rect x="1257" y="805" width="2" height="2" fill="rgb(111,111,124)"/><rect x="1011" y="302" width="2" height="2" fill="rgb(113,113,113)"/><rect x="865" y="838" width="2" height="2" fill="rgb(111,111,111)"/><rect x="832" y="439" width="2" height="2" fill="rgb(226,226,226)"/><rect x="516" y="612" width="2" height="2" fill="rgb(86,86,86)"/><rect x="1473" y="504" width="2" height="2" fill="rgb(93,93,93)"/><rect x="852" y="207" width="2" height="2" fill="rgb(77,77,86)"/><rect x="499" y="417" width="2" height="2" fill="rgb(94,94,94)"/><rect x="196" y="530" width="2" height="2" fill="rgb(121,121,121)"/><rect x="906" y="615" width="2" height="2" fill="rgb(90,90,90)"/><rect x="745" y="532" width="2" height="2" fill="rgb(110,110,110)"/><rect x="524" y="283" width="2" height="2" fill="rgb(91,91,91)"/><rect x="631" y="562" width="2" height="2" fill="rgb(80,80,80)"/><rect x="1335" y="280" width="2" height="2" fill="rgb(107,107,107)"/><rect x="486" y="889" width="2" height="2" fill="rgb(94,94,94)"/><rect x="300" y="140" width="2" height="2" fill="rgb(123,123,123)"/><rect x="158" y="401" width="2" height="2" fill="rgb(101,101,101)"/><rect x="228" y="269" width="2" height="2" fill="rgb(227,227,227)"/><rect x="294" y="360" width="2" height="2" fill="rgb(97,97,97)"/><rect x="974" y="777" width="2" height="2" fill="rgb(121,121,121)"/><rect x="1154" y="690" width="2" height="2" fill="rgb(117,117,117)"/><rect x="1222" y="662" width="2" height="2" fill="rgb(201,201,224)"/><rect x="1348" y="90" width="2" height="2" fill="rgb(118,118,118)"/><rect x="799" y="869" width="2" height="2" fill="rgb(108,108,108)"/><rect x="1220" y="796" width="2" height="2" fill="rgb(110,110,110)"/><rect x="732" y="458" width="2" height="2" fill="rgb(116,116,116)"/><rect x="642" y="538" width="2" height="2" fill="rgb(99,99,99)"/><rect x="1225" y="777" width="2" height="2" fill="rgb(104,104,104)"/><rect x="338" y="333" width="2" height="2" fill="rgb(87,87,87)"/><rect x="923" y="157" width="2" height="2" fill="rgb(224,224,224)"/><rect x="1308" y="767" width="2" height="2" fill="rgb(227,227,227)"/><rect x="694" y="826" width="2" height="2" fill="rgb(72,72,80)"/><rect x="898" y="490" width="2" height="2" fill="rgb(224,224,224)"/><rect x="859" y="898" width="2" height="2" fill="rgb(105,105,105)"/><rect x="1075" y="403" width="2" height="2" fill="rgb(97,97,97)"/><rect x="583" y="857" width="2" height="2" fill="rgb(113,113,113)"/><rect x="213" y="390" width="2" height="2" fill="rgb(100,100,100)"/><rect x="911" y="801" width="2" height="2" fill="rgb(227,227,227)"/><rect x="714" y="594" width="2" height="2" fill="rgb(229,229,229)"/><rect x="847" y="749" width="2" height="2" fill="rgb(88,88,88)"/><rect x="1506" y="758" width="2" height="2" fill="rgb(94,94,105)"/><rect x="1383" y="647" width="2" height="2" fill="rgb(121,121,121)"/><rect x="1373" y="428" width="2" height="2" fill="rgb(87,87,87)"/><rect x="820" y="496" width="2" height="2" fill="rgb(80,80,89)"/><rect x="994" y="576" width="2" height="2" fill="rgb(97,97,97)"/><rect x="1003" y="120" width="2" height="2" fill="rgb(100,100,100)"/><rect x="518" y="648" width="2" height="2" fill="rgb(80,80,80)"/><rect x="1306" y="563" width="2" height="2" fill="rgb(101,101,113)"/><rect x="799" y="536" width="2" height="2" fill="rgb(93,93,93)"/><rect x="849" y="897" width="2" height="2" fill="rgb(108,108,108)"/><rect x="246" y="213" width="2" height="2" fill="rgb(105,105,117)"/><rect x="214" y="225" width="2" height="2" fill="rgb(106,106,106)"/><rect x="969" y="742" width="2" height="2" fill="rgb(74,74,83)"/><rect x="1201" y="348" width="2" height="2" fill="rgb(115,115,115)"/><rect x="316" y="303" width="2" height="2" fill="rgb(84,84,84)"/><rect x="924" y="370" width="2" height="2" fill="rgb(102,102,102)"/><rect x="147" y="810" width="2" height="2" fill="rgb(109,109,109)"/><rect x="714" y="590" width="2" height="2" fill="rgb(82,82,92)"/><rect x="1436" y="781" width="2" height="2" fill="rgb(95,95,95)"/><rect x="1267" y="333" width="2" height="2" fill="rgb(110,110,110)"/><rect x="796" y="858" width="2" height="2" fill="rgb(92,92,92)"/><rect x="1124" y="266" width="2" height="2" fill="rgb(95,95,95)"/><rect x="780" y="731" width="2" height="2" fill="rgb(82,82,92)"/><rect x="594" y="238" width="2" height="2" fill="rgb(228,228,228)"/><rect x="893" y="179" width="2" height="2" fill="rgb(106,106,106)"/><rect x="660" y="139" width="2" height="2" fill="rgb(86,86,86)"/><rect x="584" y="285" width="2" height="2" fill="rgb(89,89,89)"/><rect x="416" y="114" width="2" height="2" fill="rgb(113,113,113)"/><rect x="296" y="660" width="2" height="2" fill="rgb(84,84,84)"/><rect x="1295" y="190" width="2" height="2" fill="rgb(102,102,102)"/><rect x="1251" y="215" width="2" height="2" fill="rgb(97,97,97)"/><rect x="621" y="865" width="2" height="2" fill="rgb(90,90,90)"/><rect x="810" y="271" width="2" height="2" fill="rgb(91,91,102)"/><rect x="1106" y="298" width="2" height="2" fill="rgb(124,124,124)"/><rect x="608" y="286" width="2" height="2" fill="rgb(110,110,110)"/><rect x="1350" y="186" width="2" height="2" fill="rgb(105,105,105)"/><rect x="465" y="713" width="2" height="2" fill="rgb(99,99,99)"/><rect x="902" y="339" width="2" height="2" fill="rgb(89,89,99)"/><rect x="327" y="778" width="2" height="2" fill="rgb(96,96,96)"/><rect x="227" y="543" width="2" height="2" fill="rgb(98,98,98)"/><rect x="504" y="140" width="2" height="2" fill="rgb(95,95,95)"/><rect x="253" y="669" width="2" height="2" fill="rgb(94,94,94)"/><rect x="1404" y="716" width="2" height="2" fill="rgb(124,124,124)"/><rect x="261" y="311" width="2" height="2" fill="rgb(81,81,81)"/><rect x="1043" y="372" width="2" height="2" fill="rgb(100,100,100)"/><rect x="1096" y="288" width="2" height="2" fill="rgb(122,122,122)"/><rect x="992" y="234" width="2" height="2" fill="rgb(85,85,85)"/><rect x="1147" y="665" width="2" height="2" fill="rgb(73,73,82)"/><rect x="305" y="247" width="2" height="2" fill="rgb(95,95,95)"/><rect x="125" y="339" width="2" height="2" fill="rgb(99,99,111)"/><rect x="1302" y="550" width="2" height="2" fill="rgb(115,115,115)"/><rect x="707" y="642" width="2" height="2" fill="rgb(87,87,97)"/><rect x="1294" y="717" width="2" height="2" fill="rgb(84,84,94)"/><rect x="1323" y="580" width="2" height="2" fill="rgb(82,82,82)"/><rect x="231" y="729" width="2" height="2" fill="rgb(90,90,90)"/><rect x="1170" y="156" width="2" height="2" fill="rgb(114,114,114)"/><rect x="1167" y="760" width="2" height="2" fill="rgb(84,84,94)"/><rect x="1459" y="431" width="2" height="2" fill="rgb(225,225,225)"/><rect x="1153" y="761" width="2" height="2" fill="rgb(111,111,111)"/><rect x="147" y="654" width="2" height="2" fill="rgb(101,101,101)"/><rect x="1432" y="190" width="2" height="2" fill="rgb(106,106,118)"/><rect x="1101" y="741" width="2" height="2" fill="rgb(93,93,93)"/><rect x="1493" y="604" width="2" height="2" fill="rgb(107,107,107)"/><rect x="154" y="377" width="2" height="2" fill="rgb(100,100,100)"/><rect x="524" y="197" width="2" height="2" fill="rgb(115,115,115)"/><rect x="417" y="283" width="2" height="2" fill="rgb(105,105,105)"/><rect x="1444" y="372" width="2" height="2" fill="rgb(94,94,94)"/><rect x="276" y="544" width="2" height="2" fill="rgb(96,96,96)"/><rect x="873" y="704" width="2" height="2" fill="rgb(88,88,88)"/><rect x="948" y="461" width="2" height="2" fill="rgb(118,118,118)"/><rect x="235" y="321" width="2" height="2" fill="rgb(98,98,98)"/><rect x="156" y="314" width="2" height="2" fill="rgb(89,89,89)"/><rect x="726" y="178" width="2" height="2" fill="rgb(96,96,96)"/><rect x="601" y="223" width="2" height="2" fill="rgb(74,74,83)"/><rect x="1526" y="696" width="2" height="2" fill="rgb(84,84,84)"/><rect x="1509" y="544" width="2" height="2" fill="rgb(85,85,85)"/><rect x="706" y="240" width="2" height="2" fill="rgb(96,96,107)"/><rect x="1420" y="610" width="2" height="2" fill="rgb(111,111,111)"/><rect x="1027" y="290" width="2" height="2" fill="rgb(82,82,92)"/><rect x="108" y="716" width="2" height="2" fill="rgb(121,121,121)"/><rect x="340" y="605" width="2" height="2" fill="rgb(122,122,122)"/><rect x="315" y="724" width="2" height="2" fill="rgb(121,121,121)"/><rect x="548" y="236" width="2" height="2" fill="rgb(121,121,121)"/><rect x="609" y="534" width="2" height="2" fill="rgb(98,98,98)"/><rect x="419" y="120" width="2" height="2" fill="rgb(108,108,108)"/><rect x="1273" y="660" width="2" height="2" fill="rgb(223,223,223)"/><rect x="794" y="492" width="2" height="2" fill="rgb(87,87,87)"/><rect x="922" y="151" width="2" height="2" fill="rgb(102,102,114)"/><rect x="719" y="874" width="2" height="2" fill="rgb(75,75,84)"/><rect x="714" y="241" width="2" height="2" fill="rgb(104,104,116)"/><rect x="1304" y="781" width="2" height="2" fill="rgb(119,119,119)"/><rect x="484" y="624" width="2" height="2" fill="rgb(105,105,105)"/><rect x="565" y="443" width="2" height="2" fill="rgb(113,113,113)"/><rect x="1397" y="220" width="2" height="2" fill="rgb(94,94,94)"/><rect x="896" y="369" width="2" height="2" fill="rgb(80,80,89)"/><rect x="543" y="460" width="2" height="2" fill="rgb(227,227,227)"/><rect x="1340" y="878" width="2" height="2" fill="rgb(227,227,227)"/><rect x="1260" y="135" width="2" height="2" fill="rgb(113,113,113)"/><rect x="504" y="550" width="2" height="2" fill="rgb(226,226,226)"/><rect x="1019" y="329" width="2" height="2" fill="rgb(97,97,97)"/><rect x="108" y="240" width="2" height="2" fill="rgb(113,113,113)"/><rect x="192" y="623" width="2" height="2" fill="rgb(98,98,98)"/><rect x="679" y="517" width="2" height="2" fill="rgb(108,108,108)"/><rect x="235" y="233" width="2" height="2" fill="rgb(124,124,124)"/><rect x="232" y="787" width="2" height="2" fill="rgb(82,82,92)"/><rect x="848" y="291" width="2" height="2" fill="rgb(104,104,104)"/><rect x="400" y="552" width="2" height="2" fill="rgb(85,85,85)"/><rect x="933" y="151" width="2" height="2" fill="rgb(90,90,100)"/><rect x="714" y="788" width="2" height="2" fill="rgb(107,107,107)"/><rect x="1180" y="179" width="2" height="2" fill="rgb(229,229,229)"/><rect x="217" y="761" width="2" height="2" fill="rgb(89,89,99)"/><rect x="1479" y="544" width="2" height="2" fill="rgb(106,106,118)"/><rect x="1209" y="133" width="2" height="2" fill="rgb(91,91,91)"/><rect x="89" y="569" width="2" height="2" fill="rgb(90,90,90)"/><rect x="1108" y="432" width="2" height="2" fill="rgb(124,124,124)"/><rect x="1350" y="544" width="2" height="2" fill="rgb(224,224,224)"/><rect x="314" y="692" width="2" height="2" fill="rgb(97,97,97)"/><rect x="1068" y="757" width="2" height="2" fill="rgb(86,86,86)"/><rect x="1151" y="857" width="2" height="2" fill="rgb(104,104,116)"/><rect x="955" y="167" width="2" height="2" fill="rgb(107,107,107)"/><rect x="233" y="838" width="2" height="2" fill="rgb(113,113,113)"/><rect x="351" y="449" width="2" height="2" fill="rgb(121,121,121)"/><rect x="234" y="103" width="2" height="2" fill="rgb(85,85,85)"/><rect x="340" y="537" width="2" height="2" fill="rgb(94,94,94)"/><rect x="627" y="203" width="2" height="2" fill="rgb(123,123,123)"/><rect x="1081" y="743" width="2" height="2" fill="rgb(203,203,226)"/><rect x="571" y="209" width="2" height="2" fill="rgb(105,105,105)"/><rect x="1244" y="115" width="2" height="2" fill="rgb(89,89,89)"/><rect x="1067" y="405" width="2" height="2" fill="rgb(92,92,103)"/><rect x="1310" y="406" width="2" height="2" fill="rgb(123,123,123)"/><rect x="179" y="354" width="2" height="2" fill="rgb(90,90,90)"/><rect x="934" y="121" width="2" height="2" fill="rgb(88,88,88)"/><rect x="755" y="555" width="2" height="2" fill="rgb(99,99,99)"/><rect x="76" y="557" width="2" height="2" fill="rgb(86,86,96)"/><rect x="743" y="888" width="2" height="2" fill="rgb(73,73,82)"/><rect x="1054" y="308" width="2" height="2" fill="rgb(93,93,93)"/><rect x="453" y="549" width="2" height="2" fill="rgb(106,106,106)"/><rect x="1527" y="114" width="2" height="2" fill="rgb(108,108,108)"/><rect x="1350" y="716" width="2" height="2" fill="rgb(111,111,111)"/><rect x="601" y="315" width="2" height="2" fill="rgb(119,119,119)"/><rect x="1448" y="640" width="2" height="2" fill="rgb(95,95,95)"/><rect x="1155" y="500" width="2" height="2" fill="rgb(111,111,111)"/><rect x="877" y="416" width="2" height="2" fill="rgb(83,83,83)"/><rect x="542" y="890" width="2" height="2" fill="rgb(104,104,104)"/><rect x="425" y="277" width="2" height="2" fill="rgb(87,87,97)"/><rect x="78" y="794" width="2" height="2" fill="rgb(102,102,102)"/><rect x="904" y="332" width="2" height="2" fill="rgb(79,79,88)"/><rect x="510" y="337" width="2" height="2" fill="rgb(116,116,116)"/><rect x="1446" y="363" width="2" height="2" fill="rgb(224,224,224)"/><rect x="185" y="231" width="2" height="2" fill="rgb(109,109,109)"/><rect x="592" y="716" width="2" height="2" fill="rgb(101,101,101)"/><rect x="167" y="480" width="2" height="2" fill="rgb(124,124,124)"/><rect x="446" y="105" width="2" height="2" fill="rgb(88,88,88)"/><rect x="1103" y="263" width="2" height="2" fill="rgb(99,99,99)"/><rect x="954" y="788" width="2" height="2" fill="rgb(100,100,112)"/><rect x="1147" y="869" width="2" height="2" fill="rgb(99,99,110)"/><rect x="1258" y="798" width="2" height="2" fill="rgb(87,87,97)"/><rect x="344" y="523" width="2" height="2" fill="rgb(123,123,123)"/><rect x="1425" y="259" width="2" height="2" fill="rgb(96,96,96)"/><rect x="1022" y="416" width="2" height="2" fill="rgb(113,113,113)"/><rect x="152" y="423" width="2" height="2" fill="rgb(82,82,82)"/><rect x="674" y="611" width="2" height="2" fill="rgb(111,111,119)"/><rect x="627" y="594" width="2" height="2" fill="rgb(70,70,75)"/><rect x="1034" y="651" width="2" height="2" fill="rgb(139,139,150)"/><rect x="504" y="679" width="2" height="2" fill="rgb(120,120,129)"/><rect x="671" y="383" width="2" height="2" fill="rgb(80,80,86)"/><rect x="557" y="767" width="2" height="2" fill="rgb(76,76,82)"/><rect x="967" y="571" width="2" height="2" fill="rgb(107,107,115)"/><rect x="829" y="646" width="2" height="2" fill="rgb(116,116,125)"/><rect x="837" y="518" width="2" height="2" fill="rgb(121,121,130)"/><rect x="627" y="735" width="2" height="2" fill="rgb(123,123,132)"/><rect x="943" y="506" width="2" height="2" fill="rgb(124,124,133)"/><rect x="1066" y="588" width="2" height="2" fill="rgb(89,89,96)"/><rect x="789" y="865" width="2" height="2" fill="rgb(79,79,85)"/><rect x="476" y="601" width="2" height="2" fill="rgb(115,115,124)"/><rect x="942" y="536" width="2" height="2" fill="rgb(139,139,150)"/><rect x="609" y="760" width="2" height="2" fill="rgb(76,76,82)"/><rect x="487" y="406" width="2" height="2" fill="rgb(74,74,79)"/><rect x="776" y="646" width="2" height="2" fill="rgb(82,82,88)"/><rect x="1043" y="538" width="2" height="2" fill="rgb(80,80,86)"/><rect x="578" y="750" width="2" height="2" fill="rgb(134,134,144)"/><rect x="569" y="347" width="2" height="2" fill="rgb(124,124,133)"/><rect x="618" y="889" width="2" height="2" fill="rgb(104,104,112)"/><rect x="858" y="526" width="2" height="2" fill="rgb(126,126,136)"/><rect x="751" y="514" width="2" height="2" fill="rgb(133,133,143)"/><rect x="536" y="747" width="2" height="2" fill="rgb(74,74,79)"/><rect x="864" y="559" width="2" height="2" fill="rgb(130,130,140)"/><rect x="507" y="651" width="2" height="2" fill="rgb(98,98,105)"/><rect x="1031" y="868" width="2" height="2" fill="rgb(113,113,122)"/><rect x="607" y="473" width="2" height="2" fill="rgb(88,88,95)"/><rect x="735" y="462" width="2" height="2" fill="rgb(84,84,90)"/><rect x="933" y="696" width="2" height="2" fill="rgb(90,90,97)"/><rect x="1077" y="453" width="2" height="2" fill="rgb(109,109,117)"/><rect x="566" y="821" width="2" height="2" fill="rgb(130,130,140)"/><rect x="633" y="758" width="2" height="2" fill="rgb(127,127,137)"/><rect x="642" y="519" width="2" height="2" fill="rgb(103,103,111)"/><rect x="1013" y="422" width="2" height="2" fill="rgb(117,117,126)"/><rect x="835" y="588" width="2" height="2" fill="rgb(110,110,118)"/><rect x="1009" y="449" width="2" height="2" fill="rgb(131,131,141)"/><rect x="690" y="774" width="2" height="2" fill="rgb(130,130,140)"/><rect x="581" y="822" width="2" height="2" fill="rgb(139,139,150)"/><rect x="652" y="344" width="2" height="2" fill="rgb(77,77,83)"/><rect x="1064" y="335" width="2" height="2" fill="rgb(133,133,143)"/><rect x="562" y="749" width="2" height="2" fill="rgb(76,76,82)"/><rect x="573" y="718" width="2" height="2" fill="rgb(76,76,82)"/><rect x="677" y="853" width="2" height="2" fill="rgb(120,120,129)"/><rect x="1008" y="887" width="2" height="2" fill="rgb(72,72,77)"/><rect x="613" y="781" width="2" height="2" fill="rgb(118,118,127)"/><rect x="493" y="617" width="2" height="2" fill="rgb(86,86,92)"/><rect x="733" y="390" width="2" height="2" fill="rgb(71,71,76)"/><rect x="1074" y="510" width="2" height="2" fill="rgb(131,131,141)"/><rect x="543" y="607" width="2" height="2" fill="rgb(79,79,85)"/><rect x="731" y="432" width="2" height="2" fill="rgb(117,117,126)"/><rect x="560" y="750" width="2" height="2" fill="rgb(105,105,113)"/><rect x="539" y="531" width="2" height="2" fill="rgb(104,104,112)"/><rect x="1030" y="529" width="2" height="2" fill="rgb(85,85,91)"/><rect x="1060" y="833" width="2" height="2" fill="rgb(121,121,130)"/><rect x="637" y="431" width="2" height="2" fill="rgb(88,88,95)"/><rect x="512" y="355" width="2" height="2" fill="rgb(105,105,113)"/><rect x="719" y="647" width="2" height="2" fill="rgb(95,95,102)"/><rect x="476" y="722" width="2" height="2" fill="rgb(115,115,124)"/><rect x="802" y="642" width="2" height="2" fill="rgb(118,118,127)"/><rect x="1069" y="827" width="2" height="2" fill="rgb(120,120,129)"/><rect x="714" y="511" width="2" height="2" fill="rgb(99,99,106)"/><rect x="1063" y="550" width="2" height="2" fill="rgb(96,96,103)"/><rect x="720" y="411" width="2" height="2" fill="rgb(139,139,150)"/><rect x="473" y="676" width="2" height="2" fill="rgb(134,134,144)"/><rect x="625" y="678" width="2" height="2" fill="rgb(96,96,103)"/><rect x="617" y="443" width="2" height="2" fill="rgb(78,78,84)"/><rect x="984" y="776" width="2" height="2" fill="rgb(133,133,143)"/><rect x="500" y="725" width="2" height="2" fill="rgb(92,92,99)"/><rect x="864" y="642" width="2" height="2" fill="rgb(92,92,99)"/><rect x="1063" y="331" width="2" height="2" fill="rgb(122,122,131)"/><rect x="991" y="620" width="2" height="2" fill="rgb(111,111,119)"/><rect x="1077" y="463" width="2" height="2" fill="rgb(114,114,123)"/><rect x="923" y="546" width="2" height="2" fill="rgb(119,119,128)"/><rect x="710" y="629" width="2" height="2" fill="rgb(112,112,120)"/><rect x="883" y="513" width="2" height="2" fill="rgb(114,114,123)"/><rect x="801" y="457" width="2" height="2" fill="rgb(112,112,120)"/><rect x="632" y="847" width="2" height="2" fill="rgb(103,103,111)"/><rect x="910" y="627" width="2" height="2" fill="rgb(103,103,111)"/><rect x="605" y="411" width="2" height="2" fill="rgb(134,134,144)"/><rect x="793" y="628" width="2" height="2" fill="rgb(106,106,114)"/><rect x="966" y="466" width="2" height="2" fill="rgb(82,82,88)"/><rect x="971" y="592" width="2" height="2" fill="rgb(114,114,123)"/><rect x="975" y="839" width="2" height="2" fill="rgb(130,130,140)"/><rect x="496" y="547" width="2" height="2" fill="rgb(128,128,138)"/><rect x="969" y="400" width="2" height="2" fill="rgb(80,80,86)"/><rect x="623" y="388" width="2" height="2" fill="rgb(94,94,101)"/><rect x="960" y="627" width="2" height="2" fill="rgb(101,101,109)"/><rect x="524" y="555" width="2" height="2" fill="rgb(139,139,150)"/><rect x="894" y="586" width="2" height="2" fill="rgb(103,103,111)"/><rect x="957" y="762" width="2" height="2" fill="rgb(80,80,86)"/><rect x="885" y="539" width="2" height="2" fill="rgb(106,106,114)"/><rect x="615" y="541" width="2" height="2" fill="rgb(93,93,100)"/><rect x="702" y="340" width="2" height="2" fill="rgb(84,84,90)"/><rect x="818" y="363" width="2" height="2" fill="rgb(82,82,88)"/><rect x="908" y="486" width="2" height="2" fill="rgb(92,92,99)"/><rect x="618" y="805" width="2" height="2" fill="rgb(76,76,82)"/><rect x="858" y="819" width="2" height="2" fill="rgb(84,84,90)"/><rect x="728" y="781" width="2" height="2" fill="rgb(113,113,122)"/><rect x="697" y="355" width="2" height="2" fill="rgb(100,100,108)"/><rect x="694" y="735" width="2" height="2" fill="rgb(90,90,97)"/><rect x="719" y="699" width="2" height="2" fill="rgb(126,126,136)"/><rect x="685" y="549" width="2" height="2" fill="rgb(110,110,118)"/><rect x="1034" y="439" width="2" height="2" fill="rgb(137,137,147)"/><rect x="904" y="542" width="2" height="2" fill="rgb(116,116,125)"/><rect x="671" y="370" width="2" height="2" fill="rgb(122,122,131)"/><rect x="701" y="629" width="2" height="2" fill="rgb(104,104,112)"/><rect x="1020" y="761" width="2" height="2" fill="rgb(71,71,76)"/><rect x="832" y="593" width="2" height="2" fill="rgb(102,102,110)"/><rect x="982" y="566" width="2" height="2" fill="rgb(103,103,111)"/><rect x="1013" y="580" width="2" height="2" fill="rgb(104,104,112)"/><rect x="782" y="799" width="2" height="2" fill="rgb(116,116,125)"/><rect x="922" y="559" width="2" height="2" fill="rgb(72,72,77)"/><rect x="885" y="645" width="2" height="2" fill="rgb(123,123,132)"/><rect x="940" y="397" width="2" height="2" fill="rgb(85,85,91)"/><rect x="517" y="795" width="2" height="2" fill="rgb(77,77,83)"/><rect x="524" y="759" width="2" height="2" fill="rgb(109,109,117)"/><rect x="504" y="717" width="2" height="2" fill="rgb(119,119,128)"/><rect x="765" y="361" width="2" height="2" fill="rgb(118,118,127)"/><rect x="725" y="662" width="2" height="2" fill="rgb(139,139,150)"/><rect x="968" y="826" width="2" height="2" fill="rgb(80,80,86)"/><rect x="674" y="625" width="2" height="2" fill="rgb(70,70,75)"/><rect x="1073" y="486" width="2" height="2" fill="rgb(88,88,95)"/><rect x="661" y="475" width="2" height="2" fill="rgb(130,130,140)"/><rect x="809" y="621" width="2" height="2" fill="rgb(99,99,106)"/><rect x="501" y="503" width="2" height="2" fill="rgb(130,130,140)"/><rect x="959" y="817" width="2" height="2" fill="rgb(87,87,93)"/><rect x="593" y="360" width="2" height="2" fill="rgb(107,107,115)"/><rect x="698" y="594" width="2" height="2" fill="rgb(104,104,112)"/><rect x="826" y="538" width="2" height="2" fill="rgb(126,126,136)"/><rect x="592" y="853" width="2" height="2" fill="rgb(108,108,116)"/><rect x="501" y="509" width="2" height="2" fill="rgb(107,107,115)"/><rect x="719" y="651" width="2" height="2" fill="rgb(92,92,99)"/><rect x="637" y="783" width="2" height="2" fill="rgb(90,90,97)"/><rect x="903" y="787" width="2" height="2" fill="rgb(111,111,119)"/><rect x="747" y="862" width="2" height="2" fill="rgb(101,101,109)"/><rect x="1006" y="363" width="2" height="2" fill="rgb(100,100,108)"/><rect x="860" y="358" width="2" height="2" fill="rgb(130,130,140)"/><rect x="514" y="669" width="2" height="2" fill="rgb(82,82,88)"/><rect x="1033" y="649" width="2" height="2" fill="rgb(126,126,136)"/><rect x="774" y="713" width="2" height="2" fill="rgb(117,117,126)"/><rect x="650" y="450" width="2" height="2" fill="rgb(128,128,138)"/><rect x="559" y="852" width="2" height="2" fill="rgb(84,84,90)"/><rect x="532" y="384" width="2" height="2" fill="rgb(124,124,133)"/><rect x="1050" y="566" width="2" height="2" fill="rgb(116,116,125)"/><rect x="627" y="845" width="2" height="2" fill="rgb(118,118,127)"/><rect x="564" y="362" width="2" height="2" fill="rgb(118,118,127)"/><rect x="495" y="806" width="2" height="2" fill="rgb(90,90,97)"/><rect x="612" y="661" width="2" height="2" fill="rgb(92,92,99)"/><rect x="812" y="418" width="2" height="2" fill="rgb(133,133,143)"/><rect x="668" y="809" width="2" height="2" fill="rgb(80,80,86)"/><rect x="958" y="888" width="2" height="2" fill="rgb(97,97,104)"/><rect x="490" y="546" width="2" height="2" fill="rgb(114,114,123)"/><rect x="606" y="641" width="2" height="2" fill="rgb(76,76,82)"/><rect x="753" y="744" width="2" height="2" fill="rgb(100,100,108)"/><rect x="884" y="395" width="2" height="2" fill="rgb(127,127,137)"/><rect x="544" y="855" width="2" height="2" fill="rgb(139,139,150)"/><rect x="1043" y="629" width="2" height="2" fill="rgb(90,90,97)"/><rect x="682" y="757" width="2" height="2" fill="rgb(104,104,112)"/><rect x="1037" y="383" width="2" height="2" fill="rgb(103,103,111)"/><rect x="997" y="670" width="2" height="2" fill="rgb(107,107,115)"/><rect x="524" y="409" width="2" height="2" fill="rgb(88,88,95)"/><rect x="1015" y="811" width="2" height="2" fill="rgb(85,85,91)"/><rect x="1034" y="348" width="2" height="2" fill="rgb(111,111,119)"/><rect x="1060" y="526" width="2" height="2" fill="rgb(136,136,146)"/><rect x="870" y="358" width="2" height="2" fill="rgb(93,93,100)"/><rect x="744" y="471" width="2" height="2" fill="rgb(121,121,130)"/><rect x="579" y="778" width="2" height="2" fill="rgb(90,90,97)"/><rect x="512" y="648" width="2" height="2" fill="rgb(76,76,82)"/><rect x="806" y="778" width="2" height="2" fill="rgb(111,111,119)"/><rect x="751" y="349" width="2" height="2" fill="rgb(105,105,113)"/><rect x="529" y="698" width="2" height="2" fill="rgb(79,79,85)"/><rect x="823" y="531" width="2" height="2" fill="rgb(96,96,103)"/><rect x="875" y="423" width="2" height="2" fill="rgb(81,81,87)"/><rect x="1044" y="519" width="2" height="2" fill="rgb(128,128,138)"/><rect x="1003" y="603" width="2" height="2" fill="rgb(80,80,86)"/><rect x="527" y="830" width="2" height="2" fill="rgb(78,78,84)"/><rect x="773" y="635" width="2" height="2" fill="rgb(78,78,84)"/><rect x="755" y="423" width="2" height="2" fill="rgb(107,107,115)"/><rect x="779" y="539" width="2" height="2" fill="rgb(83,83,89)"/><rect x="716" y="446" width="2" height="2" fill="rgb(78,78,84)"/><rect x="616" y="826" width="2" height="2" fill="rgb(105,105,113)"/><rect x="1013" y="339" width="2" height="2" fill="rgb(136,136,146)"/><rect x="768" y="780" width="2" height="2" fill="rgb(109,109,117)"/><rect x="890" y="460" width="2" height="2" fill="rgb(122,122,131)"/><rect x="564" y="480" width="2" height="2" fill="rgb(72,72,77)"/><rect x="710" y="625" width="2" height="2" fill="rgb(90,90,97)"/><rect x="1013" y="378" width="2" height="2" fill="rgb(110,110,118)"/><rect x="613" y="669" width="2" height="2" fill="rgb(124,124,133)"/><rect x="904" y="365" width="2" height="2" fill="rgb(87,87,93)"/><rect x="835" y="889" width="2" height="2" fill="rgb(72,72,77)"/><rect x="847" y="724" width="2" height="2" fill="rgb(127,127,137)"/><rect x="679" y="791" width="2" height="2" fill="rgb(102,102,110)"/><rect x="1032" y="336" width="2" height="2" fill="rgb(135,135,145)"/><rect x="721" y="562" width="2" height="2" fill="rgb(76,76,82)"/><rect x="619" y="748" width="2" height="2" fill="rgb(117,117,126)"/><rect x="562" y="526" width="2" height="2" fill="rgb(79,79,85)"/><rect x="591" y="455" width="2" height="2" fill="rgb(93,93,100)"/><rect x="1065" y="897" width="2" height="2" fill="rgb(125,125,135)"/><rect x="763" y="613" width="2" height="2" fill="rgb(124,124,133)"/><rect x="1024" y="758" width="2" height="2" fill="rgb(114,114,123)"/><rect x="591" y="686" width="2" height="2" fill="rgb(129,129,139)"/><rect x="950" y="383" width="2" height="2" fill="rgb(120,120,129)"/><rect x="683" y="422" width="2" height="2" fill="rgb(137,137,147)"/><rect x="880" y="754" width="2" height="2" fill="rgb(79,79,85)"/><rect x="975" y="863" width="2" height="2" fill="rgb(133,133,143)"/><rect x="924" y="804" width="2" height="2" fill="rgb(126,126,136)"/><rect x="830" y="578" width="2" height="2" fill="rgb(127,127,137)"/><rect x="949" y="825" width="2" height="2" fill="rgb(90,90,97)"/><rect x="1056" y="633" width="2" height="2" fill="rgb(136,136,146)"/><rect x="541" y="881" width="2" height="2" fill="rgb(125,125,135)"/><rect x="624" y="807" width="2" height="2" fill="rgb(86,86,92)"/><rect x="591" y="591" width="2" height="2" fill="rgb(86,86,92)"/><rect x="770" y="847" width="2" height="2" fill="rgb(117,117,126)"/><rect x="903" y="553" width="2" height="2" fill="rgb(124,124,133)"/><rect x="954" y="719" width="2" height="2" fill="rgb(135,135,145)"/><rect x="974" y="561" width="2" height="2" fill="rgb(76,76,82)"/><rect x="868" y="806" width="2" height="2" fill="rgb(93,93,100)"/><rect x="833" y="806" width="2" height="2" fill="rgb(125,125,135)"/><rect x="473" y="608" width="2" height="2" fill="rgb(71,71,76)"/><rect x="537" y="792" width="2" height="2" fill="rgb(99,99,106)"/><rect x="839" y="590" width="2" height="2" fill="rgb(93,93,100)"/><rect x="600" y="531" width="2" height="2" fill="rgb(129,129,139)"/><rect x="848" y="496" width="2" height="2" fill="rgb(76,76,82)"/><rect x="635" y="729" width="2" height="2" fill="rgb(100,100,108)"/><rect x="873" y="789" width="2" height="2" fill="rgb(78,78,84)"/><rect x="887" y="354" width="2" height="2" fill="rgb(127,127,137)"/><rect x="582" y="484" width="2" height="2" fill="rgb(137,137,147)"/><rect x="691" y="458" width="2" height="2" fill="rgb(132,132,142)"/><rect x="842" y="839" width="2" height="2" fill="rgb(97,97,104)"/><rect x="775" y="874" width="2" height="2" fill="rgb(105,105,113)"/><rect x="1073" y="438" width="2" height="2" fill="rgb(128,128,138)"/><rect x="569" y="630" width="2" height="2" fill="rgb(70,70,75)"/><rect x="577" y="868" width="2" height="2" fill="rgb(101,101,109)"/><rect x="964" y="473" width="2" height="2" fill="rgb(94,94,101)"/><rect x="532" y="644" width="2" height="2" fill="rgb(130,130,140)"/><rect x="783" y="544" width="2" height="2" fill="rgb(135,135,145)"/><rect x="1015" y="709" width="2" height="2" fill="rgb(75,75,81)"/><rect x="851" y="583" width="2" height="2" fill="rgb(137,137,147)"/><rect x="691" y="706" width="2" height="2" fill="rgb(114,114,123)"/><rect x="699" y="627" width="2" height="2" fill="rgb(117,117,126)"/><rect x="1023" y="613" width="2" height="2" fill="rgb(95,95,102)"/><rect x="1065" y="362" width="2" height="2" fill="rgb(128,128,138)"/><rect x="887" y="647" width="2" height="2" fill="rgb(101,101,109)"/><rect x="928" y="837" width="2" height="2" fill="rgb(121,121,130)"/><rect x="927" y="350" width="2" height="2" fill="rgb(92,92,99)"/><rect x="554" y="872" width="2" height="2" fill="rgb(132,132,142)"/><rect x="558" y="664" width="2" height="2" fill="rgb(110,110,118)"/><rect x="498" y="553" width="2" height="2" fill="rgb(122,122,131)"/><rect x="861" y="490" width="2" height="2" fill="rgb(123,123,132)"/><rect x="648" y="640" width="2" height="2" fill="rgb(99,99,106)"/><rect x="1067" y="699" width="2" height="2" fill="rgb(126,126,136)"/><rect x="883" y="546" width="2" height="2" fill="rgb(137,137,147)"/><rect x="903" y="723" width="2" height="2" fill="rgb(89,89,96)"/><rect x="569" y="657" width="2" height="2" fill="rgb(127,127,137)"/><rect x="954" y="528" width="2" height="2" fill="rgb(79,79,85)"/><rect x="785" y="829" width="2" height="2" fill="rgb(81,81,87)"/><rect x="920" y="427" width="2" height="2" fill="rgb(91,91,98)"/><rect x="503" y="499" width="2" height="2" fill="rgb(96,96,103)"/><rect x="1060" y="877" width="2" height="2" fill="rgb(83,83,89)"/><rect x="659" y="867" width="2" height="2" fill="rgb(83,83,89)"/><rect x="666" y="579" width="2" height="2" fill="rgb(77,77,83)"/><rect x="629" y="554" width="2" height="2" fill="rgb(96,96,103)"/><rect x="1058" y="482" width="2" height="2" fill="rgb(84,84,90)"/><rect x="1024" y="586" width="2" height="2" fill="rgb(128,128,138)"/><rect x="859" y="773" width="2" height="2" fill="rgb(92,92,99)"/><rect x="563" y="761" width="2" height="2" fill="rgb(102,102,110)"/><rect x="811" y="712" width="2" height="2" fill="rgb(122,122,131)"/><rect x="638" y="536" width="2" height="2" fill="rgb(134,134,144)"/><rect x="793" y="494" width="2" height="2" fill="rgb(114,114,123)"/><rect x="628" y="769" width="2" height="2" fill="rgb(72,72,77)"/><rect x="974" y="652" width="2" height="2" fill="rgb(94,94,101)"/><rect x="1043" y="481" width="2" height="2" fill="rgb(87,87,93)"/><rect x="513" y="642" width="2" height="2" fill="rgb(122,122,131)"/><rect x="884" y="565" width="2" height="2" fill="rgb(126,126,136)"/><rect x="538" y="505" width="2" height="2" fill="rgb(115,115,124)"/><rect x="1060" y="691" width="2" height="2" fill="rgb(118,118,127)"/><rect x="943" y="554" width="2" height="2" fill="rgb(135,135,145)"/><rect x="923" y="524" width="2" height="2" fill="rgb(97,97,104)"/><rect x="961" y="529" width="2" height="2" fill="rgb(83,83,89)"/><rect x="1002" y="633" width="2" height="2" fill="rgb(106,106,114)"/><rect x="878" y="843" width="2" height="2" fill="rgb(79,79,85)"/><rect x="677" y="368" width="2" height="2" fill="rgb(98,98,105)"/><rect x="776" y="815" width="2" height="2" fill="rgb(116,116,125)"/><rect x="822" y="560" width="2" height="2" fill="rgb(110,110,118)"/><rect x="637" y="811" width="2" height="2" fill="rgb(125,125,135)"/><rect x="981" y="416" width="2" height="2" fill="rgb(117,117,126)"/><rect x="930" y="615" width="2" height="2" fill="rgb(132,132,142)"/><rect x="1018" y="753" width="2" height="2" fill="rgb(127,127,137)"/><rect x="866" y="830" width="2" height="2" fill="rgb(79,79,85)"/><rect x="900" y="730" width="2" height="2" fill="rgb(112,112,120)"/><rect x="638" y="368" width="2" height="2" fill="rgb(112,112,120)"/><rect x="973" y="485" width="2" height="2" fill="rgb(84,84,90)"/><rect x="607" y="383" width="2" height="2" fill="rgb(117,117,126)"/><rect x="1065" y="786" width="2" height="2" fill="rgb(95,95,102)"/><rect x="897" y="371" width="2" height="2" fill="rgb(128,128,138)"/><rect x="668" y="332" width="2" height="2" fill="rgb(114,114,123)"/><rect x="555" y="487" width="2" height="2" fill="rgb(74,74,79)"/><rect x="742" y="646" width="2" height="2" fill="rgb(126,126,136)"/><rect x="494" y="801" width="2" height="2" fill="rgb(77,77,83)"/><rect x="607" y="688" width="2" height="2" fill="rgb(93,93,100)"/><rect x="672" y="653" width="2" height="2" fill="rgb(85,85,91)"/><rect x="954" y="449" width="2" height="2" fill="rgb(128,128,138)"/><rect x="963" y="636" width="2" height="2" fill="rgb(72,72,77)"/><rect x="945" y="346" width="2" height="2" fill="rgb(105,105,113)"/><rect x="729" y="366" width="2" height="2" fill="rgb(114,114,123)"/><rect x="912" y="663" width="2" height="2" fill="rgb(98,98,105)"/><rect x="782" y="665" width="2" height="2" fill="rgb(85,85,91)"/><rect x="999" y="897" width="2" height="2" fill="rgb(126,126,136)"/><rect x="1056" y="517" width="2" height="2" fill="rgb(139,139,150)"/><rect x="514" y="602" width="2" height="2" fill="rgb(79,79,85)"/><rect x="747" y="718" width="2" height="2" fill="rgb(119,119,128)"/><rect x="747" y="524" width="2" height="2" fill="rgb(83,83,89)"/><rect x="716" y="491" width="2" height="2" fill="rgb(83,83,89)"/><rect x="919" y="624" width="2" height="2" fill="rgb(100,100,108)"/><rect x="591" y="730" width="2" height="2" fill="rgb(83,83,89)"/><rect x="632" y="649" width="2" height="2" fill="rgb(119,119,128)"/><rect x="1064" y="755" width="2" height="2" fill="rgb(136,136,146)"/><rect x="1031" y="741" width="2" height="2" fill="rgb(120,120,129)"/><rect x="508" y="447" width="2" height="2" fill="rgb(70,70,75)"/><rect x="997" y="741" width="2" height="2" fill="rgb(114,114,123)"/><rect x="631" y="532" width="2" height="2" fill="rgb(81,81,87)"/><rect x="856" y="894" width="2" height="2" fill="rgb(91,91,98)"/><rect x="497" y="430" width="2" height="2" fill="rgb(94,94,101)"/><rect x="1018" y="788" width="2" height="2" fill="rgb(101,101,109)"/><rect x="532" y="391" width="2" height="2" fill="rgb(80,80,86)"/><rect x="944" y="598" width="2" height="2" fill="rgb(139,139,150)"/><rect x="1026" y="782" width="2" height="2" fill="rgb(103,103,111)"/><rect x="971" y="403" width="2" height="2" fill="rgb(77,77,83)"/>
<text x="125" y="137" font-family="Liberation Sans" font-size="14" letter-spacing="0.15" fill="#8e8e8e">Alhena (22916)</text>
<text x="125" y="152" font-family="Liberation Sans" font-size="14" letter-spacing="0.15" fill="#4f70a6">(104.82 lyrs)</text>
<text x="498" y="203" font-family="Liberation Sans" font-size="14" letter-spacing="0.15" fill="#8e8e8e">Bellatrix (17947)</text>
<text x="498" y="218" font-family="Liberation Sans" font-size="14" letter-spacing="0.15" fill="#4f70a6">(243.07 lyrs)</text>
<text x="409" y="225" font-family="Liberation Sans" font-size="14" letter-spacing="0.15" fill="#8e8e8e">Betelgeuse (19984)</text>
<text x="409" y="240" font-family="Liberation Sans" font-size="14" letter-spacing="0.15" fill="#4f70a6">(427.52 lyrs)</text>
<text x="1325" y="201" font-family="Liberation Sans" font-size="14" letter-spacing="0.15" fill="#8e8e8e">Diphda (2405)</text>
<text x="1325" y="216" font-family="Liberation Sans" font-size="14" letter-spacing="0.15" fill="#4f70a6">(95.83 lyrs)</text>
<text x="530" y="298" font-family="Liberation Sans" font-size="14" letter-spacing="0.15" fill="#8e8e8e">Alnilam (18686)</text>
<text x="530" y="313" font-family="Liberation Sans" font-size="14" letter-spacing="0.15" fill="#4f70a6">(1042.60 lyrs)</text>
<text x="525" y="310" font-family="Liberation Sans" font-size="14" letter-spacing="0.15" fill="#8e8e8e">Alnitak (19013)</text>
<text x="525" y="325" font-family="Liberation Sans" font-size="14" letter-spacing="0.15" fill="#4f70a6">(817.54 lyrs)</text>
<text x="620" y="337" font-family="Liberation Sans" font-size="14" letter-spacing="0.15" fill="#8e8e8e">Rigel (17301)</text>
<text x="620" y="352" font-family="Liberation Sans" font-size="14" letter-spacing="0.15" fill="#4f70a6">(772.99 lyrs)</text>
<text x="563" y="386" font-family="Liberation Sans" font-size="14" letter-spacing="0.15" fill="#8e8e8e">Saiph (19506)</text>
<text x="563" y="401" font-family="Liberation Sans" font-size="14" letter-spacing="0.15" fill="#4f70a6">(721.68 lyrs)</text>
<text x="637" y="431" font-family="Liberation Sans" font-size="14" letter-spacing="0.15" fill="#8e8e8e">Arneb (18430)</text>
<text x="637" y="446" font-family="Liberation Sans" font-size="14" letter-spacing="0.15" fill="#4f70a6">(1284.25 lyrs)</text>
<text x="660" y="446" font-family="Liberation Sans" font-size="14" letter-spacing="0.15" fill="#8e8e8e">Nihal (16...)</text>
<text x="659" y="462" font-family="Liberation Sans" font-size="14" letter-spacing="0.15" fill="#4f70a6">(159.20 lyrs)</text>
<text x="484" y="515" font-family="Liberation Sans" font-size="14" letter-spacing="0.15" fill="#8e8e8e">Wezen (23440)</text>
<text x="480" y="530" font-family="Liberation Sans" font-size="14" letter-spacing="0.15" fill="#4f70a6">(492.06 lyrs)</text>
<text x="930" y="516" font-family="Liberation Sans" font-size="14" letter-spacing="0.15" fill="#8e8e8e">82 G. Eri (10892)</text>
<text x="930" y="531" font-family="Liberation Sans" font-size="14" letter-spacing="0.15" fill="#4f70a6">(19.77 lyrs)</text>
<text x="1286" y="511" font-family="Liberation Sans" font-size="14" letter-spacing="0.15" fill="#8e8e8e">Ankaa (1489)</text>
<text x="1286" y="526" font-family="Liberation Sans" font-size="14" letter-spacing="0.15" fill="#4f70a6">(77.41 lyrs)</text>
<text x="560" y="614" font-family="Liberation Sans" font-size="14" letter-spacing="0.15" fill="#8e8e8e">Adhara (24404)</text>
<text x="560" y="629" font-family="Liberation Sans" font-size="14" letter-spacing="0.15" fill="#4f70a6">(430.91 lyrs)</text>
<text x="1097" y="622" font-family="Liberation Sans" font-size="14" letter-spacing="0.15" fill="#8e8e8e">ρ Eridani (5416)</text>
<text x="1099" y="632" font-family="Liberation Sans" font-size="14" letter-spacing="0.15" fill="#8e8e8e">Achernar (5297)</text>
<text x="1099" y="637" font-family="Liberation Sans" font-size="14" letter-spacing="0.15" fill="#4f70a6">(20.37 lyrs)</text>
<text x="1100" y="648" font-family="Liberation Sans" font-size="14" letter-spacing="0.15" fill="#4f70a6">(143.83 lyrs)</text>
<text x="754" y="710" font-family="Liberation Sans" font-size="14" letter-spacing="0.15" fill="#8e8e8e">Canopus (21936)</text>
<text x="754" y="725" font-family="Liberation Sans" font-size="14" letter-spacing="0.15" fill="#4f70a6">(312.75 lyrs)</text>
<text x="306" y="302" font-family="Liberation Sans" font-size="14" letter-spacing="0.15" fill="#8e8e8e">Neptune</text>
<text x="1053" y="300" font-family="Liberation Sans" font-size="14" letter-spacing="0.15" fill="#8e8e8e">Uranus</text>
<path d="M67 299H1538" stroke="#2a2a60" stroke-width="3" fill="none"/>
<path d="M725 86Q1090 125 1537 150" stroke="#2a2a66" stroke-width="2.6" fill="none"/>
<path d="M67 498L1537 767" stroke="#2c2c6a" stroke-width="2" fill="none"/>
<path d="M223.6 86L267.3 130.5L359.9 188.7L406 209.6L436.6 151.7L495.5 187L576.3 138.2L560.1 113.7L538.3 86" stroke="#30345c" stroke-width="1" fill="none"/>
<path d="M252 86L274.7 116L359.9 188.7" stroke="#30345c" stroke-width="1" fill="none"/>
<path d="M576.3 138.2L583 156.7L592 209.6" stroke="#30345c" stroke-width="1" fill="none"/>
<path d="M406 209.6L522.4 294.7L560.1 371.1L617.4 321.7" stroke="#30345c" stroke-width="1" fill="none"/>
<path d="M495.5 187L530.5 269.2L545 276L617.4 321.7" stroke="#30345c" stroke-width="1" fill="none"/>
<rect x="121" y="120" width="2.5" height="2.5" fill="#e8e8f0"/>
<rect x="405" y="209" width="2.5" height="2.5" fill="#e8e8f0"/>
<rect x="495" y="186" width="2.5" height="2.5" fill="#e8e8f0"/>
<rect x="1321" y="185" width="2.5" height="2.5" fill="#e8e8f0"/>
<rect x="616" y="320" width="2.5" height="2.5" fill="#e8e8f0"/>
<rect x="559" y="370" width="2.5" height="2.5" fill="#e8e8f0"/>
<rect x="1282" y="496" width="2.5" height="2.5" fill="#e8e8f0"/>
<rect x="750" y="696" width="2.5" height="2.5" fill="#e8e8f0"/>
<rect x="521" y="294" width="2.5" height="2.5" fill="#e8e8f0"/>
<rect x="529" y="268" width="2.5" height="2.5" fill="#e8e8f0"/>
<rect x="1096" y="618" width="2.5" height="2.5" fill="#e8e8f0"/>
<rect x="435" y="151" width="2.5" height="2.5" fill="#e8e8f0"/>
<rect x="575" y="137" width="2.5" height="2.5" fill="#e8e8f0"/>
<rect x="359" y="188" width="2.5" height="2.5" fill="#e8e8f0"/>
<defs>
<filter id="jbl" filterUnits="userSpaceOnUse" x="690" y="380" width="230" height="230"><feGaussianBlur stdDeviation="2"/></filter>
<clipPath id="jc"><circle cx="801" cy="492.5" r="96.5"/></clipPath>
<radialGradient id="jl" cx="0.45" cy="0.42" r="0.58">
<stop offset="0.6" stop-color="#000" stop-opacity="0"/>
<stop offset="0.88" stop-color="#4a3420" stop-opacity="0.12"/>
<stop offset="1" stop-color="#2a1a0a" stop-opacity="0.38"/>
</radialGradient>
</defs>
<g clip-path="url(#jc)"><rect x="700" y="390" width="205" height="205" fill="#e2d3bd"/><path d="M700 398 Q801 424.5 902 393" stroke="#d4c0a4" stroke-width="34" fill="none" opacity="1" filter="url(#jbl)"/><path d="M700 420 Q801 446.5 902 415" stroke="#ddcdb6" stroke-width="14" fill="none" opacity="1" filter="url(#jbl)"/><path d="M700 440 Q801 466.5 902 435" stroke="#cdb08e" stroke-width="10" fill="none" opacity="1" filter="url(#jbl)"/><path d="M700 464 Q801 490.5 902 459" stroke="#ebe0cd" stroke-width="24" fill="none" opacity="1" filter="url(#jbl)"/><path d="M700 485 Q801 511.5 902 480" stroke="#d8b690" stroke-width="10" fill="none" opacity="1" filter="url(#jbl)"/><path d="M700 499 Q801 525.5 902 494" stroke="#d0a276" stroke-width="16" fill="none" opacity="1" filter="url(#jbl)"/><path d="M700 515 Q801 541.5 902 510" stroke="#ebdfca" stroke-width="10" fill="none" opacity="1" filter="url(#jbl)"/><path d="M700 528 Q801 554.5 902 523" stroke="#d6ab7e" stroke-width="13" fill="none" opacity="1" filter="url(#jbl)"/><path d="M700 539 Q801 565.5 902 534" stroke="#b98a60" stroke-width="3" fill="none" opacity="1" filter="url(#jbl)"/><path d="M700 547 Q801 573.5 902 542" stroke="#e9dbc5" stroke-width="9" fill="none" opacity="1" filter="url(#jbl)"/><path d="M700 557 Q801 583.5 902 552" stroke="#d0a47a" stroke-width="8" fill="none" opacity="1" filter="url(#jbl)"/><path d="M700 572 Q801 598.5 902 567" stroke="#e3d5c2" stroke-width="22" fill="none" opacity="1" filter="url(#jbl)"/><ellipse cx="733" cy="448" rx="2.2" ry="1.8" fill="#b89878" opacity="0.7"/><ellipse cx="749" cy="455" rx="2.2" ry="1.8" fill="#b89878" opacity="0.7"/><ellipse cx="760" cy="457" rx="2.2" ry="1.8" fill="#b89878" opacity="0.7"/><ellipse cx="822" cy="460" rx="2.2" ry="1.8" fill="#b89878" opacity="0.7"/><ellipse cx="860" cy="452" rx="2.2" ry="1.8" fill="#b89878" opacity="0.7"/><ellipse cx="712" cy="505" rx="5" ry="5" fill="#f2e8d8" opacity="0.85" filter="url(#jbl)"/><ellipse cx="835" cy="524" rx="14" ry="4" fill="#f2e8d8" opacity="0.85" filter="url(#jbl)"/><ellipse cx="815" cy="554" rx="7" ry="4" fill="#f2e8d8" opacity="0.85" filter="url(#jbl)"/><ellipse cx="730" cy="519" rx="14" ry="3" fill="#f2e8d8" opacity="0.85" filter="url(#jbl)"/>
<circle cx="801" cy="492.5" r="96.5" fill="url(#jl)"/></g>
<text x="807" y="495" font-family="Liberation Sans" font-size="14" fill="#b8b0a8" opacity="0.75">Jupiter</text>
<path d="M76 874L81 868" stroke="#2a2a90" stroke-width="1.2"/><path d="M73 880L77 884M77 880L73 884M76 882L86 879" stroke="#b02828" stroke-width="1"/>
</svg></div>
<div class="a" style="left:4px;top:851px;width:61px;height:48px;background:#616161"></div>
<div class="a" style="left:5px;top:224px;width:58px;height:1px;background:#444"></div><div class="a" style="left:5px;top:225px;width:58px;height:1px;background:#666"></div>
<div class="a" style="left:5px;top:390px;width:58px;height:1px;background:#444"></div><div class="a" style="left:5px;top:391px;width:58px;height:1px;background:#666"></div>
<div class="a" style="left:5px;top:555px;width:58px;height:1px;background:#444"></div><div class="a" style="left:5px;top:556px;width:58px;height:1px;background:#666"></div>
<div class="a" style="left:5px;top:640px;width:58px;height:1px;background:#444"></div><div class="a" style="left:5px;top:641px;width:58px;height:1px;background:#666"></div>
<div class="a" style="left:5px;top:765px;width:58px;height:1px;background:#444"></div><div class="a" style="left:5px;top:766px;width:58px;height:1px;background:#666"></div>
<div class="a" style="left:5px;top:849px;width:58px;height:1px;background:#444"></div><div class="a" style="left:5px;top:850px;width:58px;height:1px;background:#666"></div>
<svg class="a" style="left:58px;top:64px" width="6" height="9" viewBox="0 0 6 9"><path d="M0 0L6 4.5L0 9Z" fill="#3a3a3a"/></svg>
<svg class="a" style="left:58px;top:105px" width="6" height="9" viewBox="0 0 6 9"><path d="M0 0L6 4.5L0 9Z" fill="#3a3a3a"/></svg>
<svg class="a" style="left:58px;top:146px" width="6" height="9" viewBox="0 0 6 9"><path d="M0 0L6 4.5L0 9Z" fill="#3a3a3a"/></svg>
<svg class="a" style="left:58px;top:187px" width="6" height="9" viewBox="0 0 6 9"><path d="M0 0L6 4.5L0 9Z" fill="#3a3a3a"/></svg>
<svg class="a" style="left:58px;top:230px" width="6" height="9" viewBox="0 0 6 9"><path d="M0 0L6 4.5L0 9Z" fill="#3a3a3a"/></svg>
<svg class="a" style="left:58px;top:271px" width="6" height="9" viewBox="0 0 6 9"><path d="M0 0L6 4.5L0 9Z" fill="#3a3a3a"/></svg>
<svg class="a" style="left:58px;top:312px" width="6" height="9" viewBox="0 0 6 9"><path d="M0 0L6 4.5L0 9Z" fill="#3a3a3a"/></svg>
<svg class="a" style="left:58px;top:352px" width="6" height="9" viewBox="0 0 6 9"><path d="M0 0L6 4.5L0 9Z" fill="#3a3a3a"/></svg>
<svg class="a" style="left:58px;top:396px" width="6" height="9" viewBox="0 0 6 9"><path d="M0 0L6 4.5L0 9Z" fill="#3a3a3a"/></svg>
<svg class="a" style="left:58px;top:437px" width="6" height="9" viewBox="0 0 6 9"><path d="M0 0L6 4.5L0 9Z" fill="#3a3a3a"/></svg>
<svg class="a" style="left:58px;top:478px" width="6" height="9" viewBox="0 0 6 9"><path d="M0 0L6 4.5L0 9Z" fill="#3a3a3a"/></svg>
<svg class="a" style="left:58px;top:519px" width="6" height="9" viewBox="0 0 6 9"><path d="M0 0L6 4.5L0 9Z" fill="#3a3a3a"/></svg>
<svg class="a" style="left:58px;top:562px" width="6" height="9" viewBox="0 0 6 9"><path d="M0 0L6 4.5L0 9Z" fill="#3a3a3a"/></svg>
<svg class="a" style="left:58px;top:602px" width="6" height="9" viewBox="0 0 6 9"><path d="M0 0L6 4.5L0 9Z" fill="#3a3a3a"/></svg>
<svg class="a" style="left:58px;top:645px" width="6" height="9" viewBox="0 0 6 9"><path d="M0 0L6 4.5L0 9Z" fill="#3a3a3a"/></svg>
<svg class="a" style="left:58px;top:687px" width="6" height="9" viewBox="0 0 6 9"><path d="M0 0L6 4.5L0 9Z" fill="#3a3a3a"/></svg>
<svg class="a" style="left:58px;top:728px" width="6" height="9" viewBox="0 0 6 9"><path d="M0 0L6 4.5L0 9Z" fill="#3a3a3a"/></svg>
<svg class="a" style="left:58px;top:770px" width="6" height="9" viewBox="0 0 6 9"><path d="M0 0L6 4.5L0 9Z" fill="#3a3a3a"/></svg>
<svg class="a" style="left:58px;top:812px" width="6" height="9" viewBox="0 0 6 9"><path d="M0 0L6 4.5L0 9Z" fill="#3a3a3a"/></svg>
<svg class="a" style="left:20px;top:67px" width="30" height="29" viewBox="0 0 30 29"><rect x="0.75" y="0.75" width="28" height="27" fill="none" stroke="#ddd" stroke-width="1.5"/><path d="M10 6L10 20L13.5 17L16 23L18.5 22L16 16L20.5 16Z" fill="#fff" stroke="#111" stroke-width="1.2"/></svg>
<svg class="a" style="left:18px;top:104px" width="31" height="34" viewBox="0 0 31 34"><defs><linearGradient id="ig" x1="0" y1="0" x2="0" y2="1"><stop offset="0" stop-color="#4a78d0"/><stop offset="1" stop-color="#2a54a8"/></linearGradient></defs><rect x="1" y="1" width="29" height="31" rx="3" fill="url(#ig)" stroke="#9ab8e8" stroke-width="1"/><circle cx="15.5" cy="8.5" r="2.6" fill="#fff"/><path d="M12 13H17.5V25H20V27.5H11.5V25H14V15.5H12Z" fill="#fff"/></svg>
<svg class="a" style="left:16px;top:144px" width="36" height="32" viewBox="0 0 36 32"><path d="M1 2L34 1L35 29L2 31Z" fill="#e8e8e8" stroke="#bbb"/><rect x="5" y="5" width="25" height="21" fill="#3a3a3a"/></svg>
<svg class="a" style="left:14px;top:183px" width="40" height="40" viewBox="0 0 40 40"><ellipse cx="11" cy="10" rx="9" ry="8" fill="#e6e6e6"/><rect x="5" y="12" width="18" height="14" rx="2" fill="#d8d8d8"/><path d="M21 16L36 20L36 34L22 30Z" fill="#222"/><rect x="6" y="20" width="14" height="8" fill="#bbb"/></svg>
<svg class="a" style="left:13px;top:229px" width="42" height="33" viewBox="0 0 42 33"><path d="M5 28L8 12Q12 5 18 6Q24 7 24 15L26 22Q30 26 38 22" fill="none" stroke="#fff" stroke-width="2.5"/><path d="M5 28L8 12M18 6L24 15L26 22" stroke="#1a1ae0" stroke-width="1" fill="none"/><g fill="#1a1ad8"><rect x="6" y="10" width="4" height="4"/><rect x="22" y="13" width="4" height="4"/><rect x="24" y="20" width="4" height="4"/><rect x="36" y="20" width="5" height="5"/><rect x="3" y="26" width="4" height="4"/></g></svg>
<svg class="a" style="left:14px;top:270px" width="40" height="28" viewBox="0 0 40 28"><path d="M2 24L10 10L17 25Z" fill="#3a9ad0" stroke="#fff" stroke-width="1.6"/><path d="M24 3L37 6L38 19L28 26L19 17Z" fill="#3a9ad0" stroke="#fff" stroke-width="1.6"/></svg>
<svg class="a" style="left:13px;top:309px" width="42" height="33" viewBox="0 0 42 33"><path d="M2 6L12 3L20 5V20L10 23L2 20Z" fill="#3a9ad0"/><path d="M2 6L12 3L20 5L10 8Z" fill="#6cc0ec"/><path d="M14 24L23 10L28 28Z" fill="#3088c0"/><circle cx="33" cy="22" r="8" fill="#3a9ad0"/><circle cx="31" cy="19" r="3" fill="#6cc0ec" opacity="0.6"/></svg>
<svg class="a" style="left:13px;top:350px" width="42" height="34" viewBox="0 0 42 34"><path d="M3 3H19Q19 12 12 14L11 22Q16 24 16 27H4Q5 24 9 22L9 14Q3 12 3 3Z" fill="#3a9ad0" stroke="#ddd" stroke-width="0.8"/><path d="M18 21Q26 14 39 16L38 26Q30 25 26 30L20 25Z" fill="#3a9ad0" stroke="#fff" stroke-width="1.2"/><path d="M20 25L26 30L22 33L17 28Z" fill="#2a80b8" stroke="#fff" stroke-width="1.2"/></svg>
<svg class="a" style="left:14px;top:394px" width="40" height="36" viewBox="0 0 40 36"><path d="M22 2L28 4L26 18L20 16Z" fill="#9a9a9a"/><path d="M20 16L26 18L23 22L19 21Z" fill="#555"/><path d="M2 24L18 17L36 24L20 33Z" fill="#3a9ad0" stroke="#fff" stroke-width="1.3"/><path d="M10 20.5L28 28.5M19 17.5L12 29" stroke="#fff" stroke-width="1"/></svg>
<div class="t b" style="left:15px;top:439px;font-size:29px;color:#c8f4f4;font-weight:normal;letter-spacing:-1px;font-family:Liberation Sans">FX</div>
<svg class="a" style="left:15px;top:480px" width="36" height="28" viewBox="0 0 36 28"><path d="M5 4L12 1L18 3V12L10 14Z" fill="#3a9ad0"/><circle cx="9" cy="17" r="7" fill="#3a9ad0"/><path d="M20 4L27 1L33 3V12L25 14Z" fill="#3a9ad0"/><circle cx="24" cy="18" r="7" fill="#3a9ad0"/><circle cx="7" cy="15" r="2.5" fill="#6cc0ec" opacity="0.6"/></svg>
<svg class="a" style="left:22px;top:517px" width="24" height="32" viewBox="0 0 24 32"><ellipse cx="12" cy="4" rx="11" ry="3.5" fill="#8a8a8a" stroke="#aaa"/><path d="M1 4L4 29Q12 32 20 29L23 4Q12 8 1 4Z" fill="#707070"/><path d="M6 6L8 29" stroke="#9a9a9a" stroke-width="2"/></svg>
<svg class="a" style="left:18px;top:562px" width="34" height="35" viewBox="0 0 34 35"><path d="M17 1L13 7H21Z" fill="#3aa050"/><rect x="16" y="6" width="2" height="5" fill="#3aa050"/><path d="M7 13L17 9L28 13V27L17 32L7 27Z" fill="#3a9ad0" stroke="#fff" stroke-width="1.5"/><path d="M7 13L17 17L28 13M17 17V32" stroke="#fff" stroke-width="1.5" fill="none"/><path d="M1 24L8 20V28Z" fill="#1a40c0"/><path d="M33 24L26 20V28Z" fill="#c02040"/></svg>
<svg class="a" style="left:18px;top:604px" width="34" height="32" viewBox="0 0 34 32"><rect x="13" y="2" width="9" height="9" fill="#3a9a9a"/><rect x="3" y="18" width="9" height="9" fill="#3a9a9a"/><rect x="22" y="20" width="10" height="10" fill="#e8e8e8"/><path d="M17 10L8 19M18 10L26 21" stroke="#ddd" stroke-width="1.5"/></svg>
<svg class="a" style="left:20px;top:645px" width="28" height="36" viewBox="0 0 28 36"><defs><radialGradient id="bg1" cx="0.45" cy="0.4" r="0.6"><stop offset="0" stop-color="#fff8d0"/><stop offset="1" stop-color="#e8c860"/></radialGradient></defs><path d="M14 1C6 1 2 7 2 13C2 18 7 21 8 26H20C21 21 26 18 26 13C26 7 22 1 14 1Z" fill="url(#bg1)"/><rect x="8" y="26" width="12" height="7" fill="#3a2a10"/><rect x="9" y="33" width="10" height="2" fill="#2a1a00"/></svg>
<svg class="a" style="left:16px;top:686px" width="36" height="36" viewBox="0 0 36 36"><rect x="0.5" y="0.5" width="35" height="35" fill="#ddd" stroke="#eee"/><g fill="#222"><rect x="1" y="1" width="6" height="6"/><rect x="13" y="1" width="6" height="6"/><rect x="25" y="1" width="6" height="6"/></g><rect x="1" y="28" width="34" height="7" fill="#888"/><circle cx="18" cy="18" r="15" fill="#3a8cc0"/><circle cx="14" cy="13" r="5" fill="#6ab0e0" opacity="0.5"/></svg>
<svg class="a" style="left:7px;top:728px" width="50" height="36" viewBox="0 0 50 36"><circle cx="10" cy="14" r="9" fill="#fff"/><g stroke="#2a7ac0" stroke-width="1.3" fill="none"><circle cx="10" cy="14" r="8.5"/><ellipse cx="10" cy="14" rx="4" ry="8.5"/><path d="M2 11H18M2 17H18M10 5.5V22.5"/></g><path d="M17 16L24 14V22L17 20Z" fill="#c02040"/><path d="M24 5L47 2L48 30L25 34Z" fill="#eee" stroke="#bbb"/><rect x="28" y="8" width="16" height="20" fill="#777"/><circle cx="36" cy="18" r="6" fill="#3a9ad8"/></svg>
<svg class="a" style="left:16px;top:769px" width="36" height="37" viewBox="0 0 36 37"><rect x="0" y="0" width="36" height="37" fill="#2a2a2a"/><g fill="#ddd"><rect x="7" y="1" width="22" height="10"/><rect x="7" y="13" width="22" height="11"/><rect x="7" y="26" width="22" height="10"/></g><g fill="#555"><rect x="2" y="3" width="3" height="4"/><rect x="2" y="11" width="3" height="4"/><rect x="2" y="19" width="3" height="4"/><rect x="2" y="27" width="3" height="4"/><rect x="31" y="3" width="3" height="4"/><rect x="31" y="11" width="3" height="4"/><rect x="31" y="19" width="3" height="4"/><rect x="31" y="27" width="3" height="4"/></g><text x="14" y="23" font-family="Liberation Sans" font-size="11" fill="#333">3</text><text x="14" y="10" font-family="Liberation Sans" font-size="9" fill="#555">3</text></svg>
<svg class="a" style="left:11px;top:811px" width="42" height="34" viewBox="0 0 42 34"><path d="M7 7L14 24L32 24" stroke="#2a80c8" stroke-width="4.5" fill="none"/><g fill="none" stroke="#d8b080" stroke-width="2.5"><circle cx="6" cy="6" r="4.5"/><circle cx="14" cy="24" r="4.5"/><circle cx="32" cy="23" r="4.5"/></g><ellipse cx="24" cy="30" rx="14" ry="2.5" fill="#333" opacity="0.5"/></svg>
<svg class="a" style="left:1547px;top:65px" width="13" height="12"><path d="M0.5 0.5H12.5L6.5 11.5Z" fill="#3cc0c8"/><path d="M0.5 0.5H12.5L6.5 4Z" fill="#7ae0e8"/><path d="M6.5 4L12.5 0.5L6.5 11.5Z" fill="#1e8088"/></svg>
<div class="t" style="left:1565px;top:66px;font-size:14.5px;color:#f0f0f0">Transform</div>
<svg class="a" style="left:1640px;top:63px" width="18" height="18" viewBox="0 0 18 18"><path d="M3 9A6 6 0 0 1 13.5 5" stroke="#3a9be0" stroke-width="3" fill="none"/><path d="M11 1.5L16.5 5L11 8Z" fill="#3a9be0"/><path d="M15 9A6 6 0 0 1 4.5 13" stroke="#3a9be0" stroke-width="3" fill="none"/><path d="M7 16.5L1.5 13L7 10Z" fill="#3a9be0"/></svg>
<div class="a" style="left:1543px;top:94px;width:17px;height:18px;background:linear-gradient(#e0e0e0,#a8a8a8);box-shadow:inset 0 0 0 1px #555,1px 1px 1px #222"></div><div class="t" style="left:1546px;top:96px;font-size:10px;color:#111">X</div><div class="t" style="left:1564px;top:97px;font-size:14.5px;color:#f0f0f0;text-shadow:1px 1px 1px #333">Scaling</div><svg class="a" style="left:1641px;top:95px" width="18" height="18" viewBox="0 0 18 18"><path d="M3 9A6 6 0 0 1 13.5 5" stroke="#3a9be0" stroke-width="3" fill="none"/><path d="M11 1.5L16.5 5L11 8Z" fill="#3a9be0"/><path d="M15 9A6 6 0 0 1 4.5 13" stroke="#3a9be0" stroke-width="3" fill="none"/><path d="M7 16.5L1.5 13L7 10Z" fill="#3a9be0"/></svg><div class="t" style="left:1543px;top:126px;font-size:15px;color:#f0f0f0;text-shadow:1px 1px 1px #333">X</div><div class="rfld" style="left:1561px;top:121px;width:80px;height:23px"><i></i><b></b></div><div class="knobv" style="left:1647px;top:120px;width:10px;height:27px"></div><div class="t" style="left:1543px;top:157px;font-size:15px;color:#f0f0f0;text-shadow:1px 1px 1px #333">Y</div><div class="rfld" style="left:1561px;top:152px;width:80px;height:23px"><i></i><b></b></div><div class="knobv" style="left:1647px;top:151px;width:10px;height:27px"></div><div class="t" style="left:1543px;top:188px;font-size:15px;color:#f0f0f0;text-shadow:1px 1px 1px #333">Z</div><div class="rfld" style="left:1561px;top:183px;width:80px;height:23px"><i></i><b></b></div><div class="knobv" style="left:1647px;top:182px;width:10px;height:27px"></div>
<div class="a" style="left:1543px;top:219px;width:17px;height:18px;background:linear-gradient(#e0e0e0,#a8a8a8);box-shadow:inset 0 0 0 1px #555,1px 1px 1px #222"></div><div class="t" style="left:1546px;top:221px;font-size:10px;color:#111">C</div><div class="t" style="left:1564px;top:222px;font-size:14.5px;color:#f0f0f0;text-shadow:1px 1px 1px #333">Rotation</div><svg class="a" style="left:1641px;top:220px" width="18" height="18" viewBox="0 0 18 18"><path d="M3 9A6 6 0 0 1 13.5 5" stroke="#3a9be0" stroke-width="3" fill="none"/><path d="M11 1.5L16.5 5L11 8Z" fill="#3a9be0"/><path d="M15 9A6 6 0 0 1 4.5 13" stroke="#3a9be0" stroke-width="3" fill="none"/><path d="M7 16.5L1.5 13L7 10Z" fill="#3a9be0"/></svg><div class="t" style="left:1543px;top:251px;font-size:15px;color:#f0f0f0;text-shadow:1px 1px 1px #333">X</div><div class="rfld" style="left:1561px;top:246px;width:80px;height:23px"><i></i><b></b></div><div class="knobv" style="left:1647px;top:245px;width:10px;height:27px"></div><div class="t" style="left:1543px;top:282px;font-size:15px;color:#f0f0f0;text-shadow:1px 1px 1px #333">Y</div><div class="rfld" style="left:1561px;top:277px;width:80px;height:23px"><i></i><b></b></div><div class="knobv" style="left:1647px;top:276px;width:10px;height:27px"></div><div class="t" style="left:1543px;top:313px;font-size:15px;color:#f0f0f0;text-shadow:1px 1px 1px #333">Z</div><div class="rfld" style="left:1561px;top:308px;width:80px;height:23px"><i></i><b></b></div><div class="knobv" style="left:1647px;top:307px;width:10px;height:27px"></div>
<div class="a" style="left:1543px;top:344px;width:17px;height:18px;background:linear-gradient(#e0e0e0,#a8a8a8);box-shadow:inset 0 0 0 1px #555,1px 1px 1px #222"></div><div class="t" style="left:1546px;top:346px;font-size:10px;color:#111">V</div><div class="t" style="left:1564px;top:347px;font-size:14.5px;color:#f0f0f0;text-shadow:1px 1px 1px #333">Translation</div><svg class="a" style="left:1641px;top:345px" width="18" height="18" viewBox="0 0 18 18"><path d="M3 9A6 6 0 0 1 13.5 5" stroke="#3a9be0" stroke-width="3" fill="none"/><path d="M11 1.5L16.5 5L11 8Z" fill="#3a9be0"/><path d="M15 9A6 6 0 0 1 4.5 13" stroke="#3a9be0" stroke-width="3" fill="none"/><path d="M7 16.5L1.5 13L7 10Z" fill="#3a9be0"/></svg><div class="t" style="left:1543px;top:376px;font-size:15px;color:#f0f0f0;text-shadow:1px 1px 1px #333">X</div><div class="rfld" style="left:1561px;top:371px;width:80px;height:23px"><i></i><b></b></div><div class="knobv" style="left:1647px;top:370px;width:10px;height:27px"></div><div class="t" style="left:1543px;top:407px;font-size:15px;color:#f0f0f0;text-shadow:1px 1px 1px #333">Y</div><div class="rfld" style="left:1561px;top:402px;width:80px;height:23px"><i></i><b></b></div><div class="knobv" style="left:1647px;top:401px;width:10px;height:27px"></div><div class="t" style="left:1543px;top:438px;font-size:15px;color:#f0f0f0;text-shadow:1px 1px 1px #333">Z</div><div class="rfld" style="left:1561px;top:433px;width:80px;height:23px"><i></i><b></b></div><div class="knobv" style="left:1647px;top:432px;width:10px;height:27px"></div>
<div class="t" style="left:1581px;top:464px;font-size:14.5px;color:#f0f0f0;text-shadow:1px 1px 1px #333">What</div>
<div class="a" style="left:1543px;top:484px;width:115px;height:58px;border-radius:6px;background:#3a3a3a"></div>
<div class="a" style="left:1543px;top:484px;width:55px;height:29px;border-radius:6px 0 0 0;background:linear-gradient(#8a8a8a,#747474 45%,#6a6a6a 55%,#7e7e7e);box-shadow:inset 0 0 0 1px #3a3a3a"></div><div class="a" style="left:1549px;top:491px;width:7px;height:15px;background:#5ab8f0;box-shadow:0 0 0 1px #444;border-radius:1px"></div><div class="t" style="left:1562px;top:492px;font-size:14.5px;color:#f0f0f0">Mdl</div>
<div class="a" style="left:1598px;top:484px;width:60px;height:29px;border-radius:0 6px 0 0;background:linear-gradient(#8a8a8a,#747474 45%,#6a6a6a 55%,#7e7e7e);box-shadow:inset 0 0 0 1px #3a3a3a"></div><div class="a" style="left:1604px;top:491px;width:7px;height:15px;background:#111;box-shadow:0 0 0 1px #444;border-radius:1px"></div><div class="t" style="left:1617px;top:492px;font-size:14.5px;color:#f0f0f0">Point</div>
<div class="a" style="left:1543px;top:513px;width:55px;height:29px;border-radius:0 0 0 6px;background:linear-gradient(#8a8a8a,#747474 45%,#6a6a6a 55%,#7e7e7e);box-shadow:inset 0 0 0 1px #3a3a3a"></div><div class="a" style="left:1549px;top:520px;width:7px;height:15px;background:#111;box-shadow:0 0 0 1px #444;border-radius:1px"></div><div class="t" style="left:1562px;top:521px;font-size:14.5px;color:#f0f0f0">Orig</div>
<div class="a" style="left:1598px;top:513px;width:60px;height:29px;border-radius:0 0 6px 0;background:linear-gradient(#8a8a8a,#747474 45%,#6a6a6a 55%,#7e7e7e);box-shadow:inset 0 0 0 1px #3a3a3a"></div><div class="a" style="left:1604px;top:520px;width:7px;height:15px;background:#111;box-shadow:0 0 0 1px #444;border-radius:1px"></div><div class="t" style="left:1617px;top:521px;font-size:14.5px;color:#f0f0f0">Txt</div>
<div class="t" style="left:1585px;top:547px;font-size:14.5px;color:#f0f0f0;text-shadow:1px 1px 1px #333">How</div>
<div class="a" style="left:1543px;top:567px;width:66px;height:29px;border-radius:6px 0 0 6px;background:linear-gradient(#8a8a8a,#747474 45%,#6a6a6a 55%,#7e7e7e);box-shadow:inset 0 0 0 1px #3a3a3a"></div><div class="a" style="left:1549px;top:574px;width:7px;height:15px;background:#5ab8f0;box-shadow:0 0 0 1px #444;border-radius:1px"></div><div class="t" style="left:1562px;top:575px;font-size:14.5px;color:#f0f0f0">View</div>
<div class="a" style="left:1609px;top:567px;width:49px;height:29px;border-radius:0 6px 6px 0;background:linear-gradient(#8a8a8a,#747474 45%,#6a6a6a 55%,#7e7e7e);box-shadow:inset 0 0 0 1px #3a3a3a"></div><div class="a" style="left:1615px;top:574px;width:7px;height:15px;background:#111;box-shadow:0 0 0 1px #444;border-radius:1px"></div><div class="t" style="left:1628px;top:575px;font-size:14.5px;color:#f0f0f0">Lcl</div>
<svg class="a" style="left:1549px;top:605px" width="20" height="20"><circle cx="8" cy="8" r="5.5" stroke="#e0c050" stroke-width="2" fill="none"/><path d="M12 12L17 17" stroke="#a08050" stroke-width="2.5"/></svg>
<svg class="a" style="left:1575px;top:609px" width="13" height="12" style="transform:scale(0.85)"><path d="M0.5 0.5H12.5L6.5 11.5Z" fill="#3cc0c8"/><path d="M0.5 0.5H12.5L6.5 4Z" fill="#7ae0e8"/><path d="M6.5 4L12.5 0.5L6.5 11.5Z" fill="#1e8088"/></svg>
<div class="fld" style="left:1551px;top:633px;width:105px;height:24px;border-radius:5px"><i style="top:4px;bottom:4px"></i></div>
<div class="a" style="left:1541px;top:660px;width:118px;height:238px;background:#6e6e6e;box-shadow:inset 0 0 0 1px #4a4a4a"></div>
<div class="a" style="left:1646px;top:662px;width:12px;height:222px;background:#5e5e5e"></div>
<div class="a" style="left:1647px;top:663px;width:11px;height:13px;background:#8a8a8a;box-shadow:inset 0 0 0 1px #555"></div>
<svg class="a" style="left:1648px;top:666px" width="9" height="7"><path d="M1 6H8L4.5 1Z" fill="#bbb"/></svg>
<div class="a" style="left:1647px;top:870px;width:11px;height:13px;background:#8a8a8a;box-shadow:inset 0 0 0 1px #555"></div>
<svg class="a" style="left:1648px;top:873px" width="9" height="7"><path d="M1 1H8L4.5 6Z" fill="#bbb"/></svg>
<div class="a" style="left:1542px;top:884px;width:104px;height:13px;background:#5e5e5e"></div>
<div class="a" style="left:1543px;top:885px;width:13px;height:11px;background:#8a8a8a;box-shadow:inset 0 0 0 1px #555"></div>
<svg class="a" style="left:1545px;top:886px" width="9" height="9"><path d="M7 1V8L1 4.5Z" fill="#bbb"/></svg>
<div class="a" style="left:1630px;top:885px;width:13px;height:11px;background:#8a8a8a;box-shadow:inset 0 0 0 1px #555"></div>
<svg class="a" style="left:1632px;top:886px" width="9" height="9"><path d="M1 1V8L7 4.5Z" fill="#bbb"/></svg>
<!-- dialog -->
<div class="a" style="left:82px;top:404px;width:450px;height:474px;background:#ebebeb"></div>
<div class="a" style="left:83px;top:405px;width:447px;height:28px;background:#5f6b76;border-top:1px solid #aab0b6"></div>
<div class="a" style="left:90px;top:408px;width:19px;height:20px;background:linear-gradient(#eef0f2,#c8c8c8);border-radius:2px"></div>
<div class="t" style="left:91px;top:412px;font-size:8px;font-weight:bold;color:#3a6fc0;letter-spacing:-0.5px">EQX</div>
<div class="t" style="left:93px;top:419px;font-size:8px;font-weight:bold;color:#c04040">3D</div>
<div class="t" style="left:225px;top:412px;font-size:12.4px;color:#c4c9ce">Solar system simulator v0.4.0</div>
<svg class="a" style="left:455px;top:410px" width="70" height="16" fill="none" stroke="#d0d4d8" stroke-width="1.2"><path d="M4 5L9.5 10.5L15 5"/><path d="M29 10.5L34.5 5L40 10.5"/><path d="M52 3.5L62 13.5M62 3.5L52 13.5"/></svg>
<div class="a" style="left:86px;top:433px;width:441px;height:441px;background:#5c5c5c"></div>
<!-- Name row -->
<div class="t" style="left:97px;top:447px;font-size:14.6px;color:#f0f0f0">Name</div>
<div class="fld" style="left:148px;top:442px;width:346px;height:24px"><i></i><span style="top:5px">Jupiter</span></div>
<svg class="a" style="left:504px;top:445px" width="14" height="12"><path d="M1 1L13 6L5 8L3 11Z" fill="#3cb4c8"/><path d="M1 1L5 8L3 11Z" fill="#1f7f90"/></svg>
<!-- checkboxes -->
<div class="cb" style="left:97px;top:479px"></div>
<div class="t" style="left:117px;top:478px;font-size:14.6px;color:#f0f0f0">Follow selection</div>
<div class="cb" style="left:239px;top:479px"></div>
<div class="t" style="left:259px;top:478px;font-size:14.6px;color:#f0f0f0">Apply to all</div>
<div class="sep" style="left:88px;top:498px;width:437px"></div>
<svg class="a" style="left:95px;top:508px" width="13" height="11"><path d="M1 1L12 5L5 7L3 10Z" fill="#3cb4c8"/><path d="M1 1L5 7L3 10Z" fill="#1f7f90"/></svg>
<div class="t" style="left:113px;top:505px;font-size:14.6px;color:#f0f0f0">Node</div>
<div class="sep" style="left:88px;top:525px;width:437px"></div>
<svg class="a" style="left:95px;top:535px" width="13" height="11"><path d="M1 1L12 5L5 7L3 10Z" fill="#3cb4c8"/><path d="M1 1L5 7L3 10Z" fill="#1f7f90"/></svg>
<div class="t" style="left:113px;top:532px;font-size:14.6px;color:#f0f0f0">Planet</div>
<div class="a" style="left:499px;top:530px;width:20px;height:19px;background:linear-gradient(#d8d8d8,#9a9a9a);box-shadow:inset 0 0 0 1px #333"></div>
<svg class="a" style="left:502px;top:533px" width="14" height="13"><path d="M2 2L12 11M12 2L2 11" stroke="#111" stroke-width="3"/></svg>
<div class="sep" style="left:88px;top:556px;width:437px"></div>
<!-- selected object -->
<div class="t" style="left:91px;top:568px;font-size:14.6px;color:#f0f0f0">The selected object is:</div>
<div class="a" style="left:241px;top:563px;width:85px;height:25px;border-radius:4px;background:linear-gradient(#8a8a8a,#6e6e6e);box-shadow:inset 0 0 0 1px #3a3a3a,0 1px 1px #333"></div>
<div class="t b" style="left:247px;top:568px;font-size:14.6px;color:#fafafa">Jupiter</div>
<svg class="a" style="left:311px;top:567px" width="10" height="17"><path d="M1 7L5 2L9 7Z M1 10L5 15L9 10Z" fill="#2a2a2a"/></svg>
<!-- show row -->
<div class="t" style="left:89px;top:602px;font-size:14.6px;color:#f0f0f0">Show</div>
<div class="track" style="left:134px;top:605px;width:60px"></div>
<div class="knob" style="left:174px;top:600px;width:20px;height:18px"></div>
<div class="fld" style="left:201px;top:597px;width:54px;height:23px"><i></i><span>100.00</span></div>
<div class="t" style="left:264px;top:602px;font-size:14.6px;color:#f0f0f0">% of orbit =</div>
<div class="track" style="left:345px;top:605px;width:60px"></div>
<div class="knob" style="left:385px;top:600px;width:20px;height:18px"></div>
<div class="fld" style="left:412px;top:597px;width:72px;height:23px"><i></i><span>4332.71</span></div>
<div class="t" style="left:493px;top:602px;font-size:14.6px;color:#f0f0f0">days</div>
<div class="sep" style="left:88px;top:628px;width:437px"></div>
<!-- universe scale -->
<div class="t" style="left:89px;top:643px;font-size:14.6px;color:#f0f0f0">Universe scale:</div>
<div class="track" style="left:198px;top:646px;width:233px;background:linear-gradient(90deg,#222,#8a8a8a)"></div>
<div class="knob" style="left:411px;top:642px;width:20px;height:17px"></div>
<div class="fld" style="left:438px;top:638px;width:81px;height:23px"><i></i><span>1.000000</span></div>
<div class="sep" style="left:88px;top:669px;width:437px"></div>
<!-- stars -->
<svg class="a" style="left:96px;top:680px" width="13" height="12"><path d="M1 1H12L7 11Z" fill="#3cb4c8"/><path d="M1 1H7V11Z" fill="#1f7f90" opacity="0.5"/></svg>
<div class="t" style="left:113px;top:681px;font-size:14.6px;color:#f0f0f0">Stars</div>
<div class="t" style="left:163px;top:681px;font-size:14.6px;color:#f0f0f0">visible: 5017</div>
<div class="t" style="left:93px;top:711px;font-size:14.6px;color:#f0f0f0">Darkest visible star (apparent magnitude):</div>
<div class="track" style="left:373px;top:714px;width:81px;background:linear-gradient(#1a1a1a,#4a4a4a)"></div>
<div class="knob" style="left:396px;top:709px;width:20px;height:18px"></div>
<div class="fld" style="left:461px;top:706px;width:54px;height:23px"><i></i><span>6.00</span></div>
<div class="a" style="left:94px;top:743px;width:16px;height:16px;border-radius:3px;background:linear-gradient(#8a8a8a,#6a6a6a);box-shadow:inset 0 0 0 1px #3a3a3a"></div>
<div class="t" style="left:115px;top:745px;font-size:14.6px;color:#f0f0f0">Constant distance:</div>
<div class="track" style="left:242px;top:747px;width:60px;background:linear-gradient(#1a1a1a,#4a4a4a)"></div>
<div class="knob" style="left:245px;top:742px;width:20px;height:18px"></div>
<div class="fld" style="left:310px;top:740px;width:98px;height:23px"><i></i><span>1000000.000</span></div>
<div class="cb" style="left:95px;top:776px"></div>
<div class="t" style="left:115px;top:775px;font-size:14.6px;color:#f0f0f0">Names</div>
<div class="cb" style="left:168px;top:776px"></div>
<div class="t" style="left:188px;top:775px;font-size:14.6px;color:#f0f0f0">Distances</div>
<div class="cb" style="left:259px;top:776px"></div>
<div class="t" style="left:279px;top:775px;font-size:14.6px;color:#f0f0f0">Constellations</div>
<div class="sep" style="left:88px;top:798px;width:437px"></div>
<!-- date row -->
<div class="t" style="left:89px;top:814px;font-size:14.6px;color:#f0f0f0">Year:</div>
<div class="fld" style="left:130px;top:808px;width:53px;height:23px"><i></i><span>2024</span></div>
<div class="t" style="left:192px;top:814px;font-size:14.6px;color:#f0f0f0">Month:</div>
<div class="fld" style="left:243px;top:808px;width:53px;height:23px"><i></i><span>2</span></div>
<div class="t" style="left:305px;top:814px;font-size:14.6px;color:#f0f0f0">Day:</div>
<div class="fld" style="left:342px;top:808px;width:53px;height:23px"><i></i><span>5</span></div>
<div class="a" style="left:405px;top:805px;width:40px;height:30px;border-radius:3px;background:linear-gradient(#8a8a8a,#6c6c6c);box-shadow:inset 0 0 0 1px #3c3c3c,0 1px 1px #333"></div>
<div class="t" style="left:410px;top:813px;font-size:14.6px;color:#f0f0f0">Now</div>
<div class="t" style="left:89px;top:849px;font-size:14.6px;color:#f0f0f0">Time:</div>
<div class="fld" style="left:132px;top:843px;width:26px;height:24px"><i></i><span>22</span></div>
<div class="t" style="left:167px;top:849px;font-size:14.6px;color:#f0f0f0">:</div>
<div class="fld" style="left:177px;top:843px;width:26px;height:24px"><i></i><span>31</span></div>
<div class="t" style="left:211px;top:849px;font-size:14.6px;color:#f0f0f0">:</div>
<div class="fld" style="left:222px;top:843px;width:26px;height:24px"><i></i><span>16</span></div>
<div class="t" style="left:265px;top:849px;font-size:14.6px;color:#f0f0f0">Julian date:</div>
<div class="fld" style="left:345px;top:843px;width:89px;height:24px"><i></i><span>2460346.50</span></div>

<div class="a" style="left:14px;top:902px;width:309px;height:35px;background:#5e5e5e;border:1px solid #4c4c4c;border-top-color:#6c6c6c"></div>
<div class="a" style="left:4px;top:902px;width:9px;height:34px;border-radius:2px;background:linear-gradient(90deg,#9a9a9a,#c8c8c8,#8a8a8a)"></div>
<div class="a" style="left:323px;top:902px;width:2px;height:35px;background:#4a4a4a"></div>
<div class="a" style="left:325px;top:902px;width:1078px;height:35px;background:#5e5e5e;border:1px solid #4c4c4c;border-top-color:#6c6c6c"></div>
<div class="a" style="left:1404px;top:902px;width:256px;height:35px;background:#5e5e5e;border:1px solid #4c4c4c;border-top-color:#6c6c6c"></div>
<div class="t" style="left:19px;top:913px;font-size:14.3px;color:#f0f0f0">Light</div>
<svg class="a" style="left:57px;top:912px" width="8" height="18" viewBox="0 0 8 18"><path d="M0 0L8 9L0 18Z" fill="#2cc040"/><path d="M0 9L8 9L0 18Z" fill="#1a8a28"/></svg>
<svg class="a" style="left:75px;top:905px" width="18" height="28" viewBox="0 0 18 28"><defs><radialGradient id="bb" cx="0.45" cy="0.35" r="0.6"><stop offset="0" stop-color="#fff8d8"/><stop offset="1" stop-color="#e0c060"/></radialGradient></defs><path d="M9 1C4 1 1 5 1 9C1 13 4 15 5 19H13C14 15 17 13 17 9C17 5 14 1 9 1Z" fill="url(#bb)"/><rect x="5" y="19" width="8" height="6" fill="#3a2810"/><rect x="6" y="25" width="6" height="2" fill="#1a1000"/></svg>
<svg class="a" style="left:102px;top:904px" width="30" height="32" viewBox="0 0 30 32"><defs><radialGradient id="sp" cx="0.45" cy="0.7" r="0.5"><stop offset="0" stop-color="#fff" stop-opacity="0.9"/><stop offset="1" stop-color="#fff" stop-opacity="0"/></radialGradient></defs><ellipse cx="14" cy="23" rx="13" ry="8" fill="url(#sp)"/><path d="M3 14L25 3L27 9L6 20Z" fill="#f4f4f4"/><circle cx="18" cy="22" r="2" fill="#222"/></svg>
<svg class="a" style="left:142px;top:904px" width="34" height="32" viewBox="0 0 34 32"><path d="M2 27L24 24L33 29L10 32Z" fill="#777" opacity="0.8"/><defs><radialGradient id="ms" cx="0.4" cy="0.35" r="0.6"><stop offset="0" stop-color="#e8e8e8"/><stop offset="0.5" stop-color="#8a8a8a"/><stop offset="1" stop-color="#444"/></radialGradient></defs><circle cx="17" cy="15" r="12" fill="url(#ms)"/></svg>
<svg class="a" style="left:178px;top:904px" width="24" height="30" viewBox="0 0 24 30"><circle cx="9" cy="9" r="5" fill="#fff" opacity="0.35"/><circle cx="9" cy="9" r="2.5" fill="#fff"/><circle cx="17" cy="25" r="3" fill="#777" opacity="0.5"/></svg>
<svg class="a" style="left:210px;top:904px" width="38" height="32" viewBox="0 0 38 32"><path d="M37 3Q24 2 20 6Q16 11 23 16Q30 21 25 26" stroke="#e6e6e6" stroke-width="2.6" fill="none"/><path d="M9 18Q15 15 21 17L22 29Q15 32 10 30Z" fill="#151515"/><path d="M2 21H10M3 26H10" stroke="#bbb" stroke-width="1.5"/></svg>
<svg class="a" style="left:259px;top:908px" width="20" height="25" viewBox="0 0 20 25"><path d="M17 2Q18 12 12 20Q7 25 3 21Q0 16 6 10Z" fill="#4aa2d2"/><path d="M15 4Q12 10 8 13" stroke="#8ad0f0" stroke-width="2" fill="none" opacity="0.6"/></svg>
<svg class="a" style="left:286px;top:905px" width="32" height="30" viewBox="0 0 32 30"><path d="M2 12L22 2L31 22L10 30Z" fill="#d8d8d8"/><path d="M6 13L21 6L27 20L12 26Z" fill="#888"/><ellipse cx="20" cy="12" rx="5" ry="3" fill="#c04870"/><circle cx="13" cy="21" r="4" fill="none" stroke="#40b0e0" stroke-width="2.5"/></svg>
<div class="t" style="left:330px;top:913px;font-size:14.3px;color:#f0f0f0">Create</div>
<svg class="a" style="left:380px;top:912px" width="8" height="18" viewBox="0 0 8 18"><path d="M0 0L8 9L0 18Z" fill="#2cc040"/><path d="M0 9L8 9L0 18Z" fill="#1a8a28"/></svg>
<svg class="a" style="left:394px;top:904px" width="26" height="28" viewBox="0 0 26 28"><circle cx="13" cy="14" r="11" fill="#2a2a3a" opacity="0.6"/><circle cx="14" cy="16" r="11" fill="#4aa2d2" stroke="#fff" stroke-width="1.5"/><path d="M3 8Q10 1 20 4" stroke="#111" stroke-width="2" fill="none"/></svg>
<svg class="a" style="left:427px;top:905px" width="30" height="30" viewBox="0 0 30 30"><polygon points="28.0,15.0 25.2,17.0 27.0,20.0 23.6,20.8 24.2,24.2 20.8,23.6 20.0,27.0 17.0,25.2 15.0,28.0 13.0,25.2 10.0,27.0 9.2,23.6 5.8,24.2 6.4,20.8 3.0,20.0 4.8,17.0 2.0,15.0 4.8,13.0 3.0,10.0 6.4,9.2 5.8,5.8 9.2,6.4 10.0,3.0 13.0,4.8 15.0,2.0 17.0,4.8 20.0,3.0 20.8,6.4 24.2,5.8 23.6,9.2 27.0,10.0 25.2,13.0" fill="#4aa2d2"/><circle cx="15" cy="15" r="6.5" fill="none" stroke="#256a98" stroke-width="2"/><circle cx="15" cy="15" r="3.2" fill="#2c6c9a"/></svg>
<svg class="a" style="left:463px;top:904px" width="26" height="30" viewBox="0 0 26 30"><path d="M2 6L14 1L24 5V24L12 29L2 25Z" fill="#4aa2d2"/><path d="M2 6L14 1L24 5L12 10Z" fill="#80c8ee"/><path d="M12 10V29L24 24V5Z" fill="#2c78a8" opacity="0.5"/></svg>
<svg class="a" style="left:498px;top:906px" width="26" height="28" viewBox="0 0 26 28"><path d="M2 3L24 4L23 25L3 24Z" fill="#4aa2d2"/><path d="M2 3L24 4L23 12L2 11Z" fill="#80c8ee" opacity="0.4"/></svg>
<svg class="a" style="left:534px;top:904px" width="26" height="30" viewBox="0 0 26 30"><path d="M14 1L2 22L22 28Z" fill="#4aa2d2"/><path d="M14 1L18 27L22 28Z" fill="#2c78a8" opacity="0.6"/></svg>
<svg class="a" style="left:570px;top:904px" width="28" height="28" viewBox="0 0 28 28"><path d="M14 2L25 8L26 20L15 27L3 21L2 9Z" fill="#4aa2d2"/><path d="M14 2L25 8L15 13L2 9Z" fill="#80c8ee"/><path d="M15 13L15 27M15 13L26 20" stroke="#2c78a8" stroke-width="0.8" fill="none"/></svg>
<svg class="a" style="left:605px;top:904px" width="28" height="28" viewBox="0 0 28 28"><path d="M12 2L24 5L27 17L19 27L6 26L1 14L4 6Z" fill="#4aa2d2"/><path d="M12 2L24 5L20 12L7 11L4 6Z" fill="#80c8ee"/><path d="M7 11L10 22L20 12M10 22L19 27" stroke="#2c78a8" stroke-width="0.8" fill="none"/></svg>
<svg class="a" style="left:643px;top:904px" width="26" height="30" viewBox="0 0 26 30"><path d="M1 5V25Q13 31 25 25V5Z" fill="#4aa2d2"/><ellipse cx="13" cy="5" rx="12" ry="4" fill="#80c8ee"/></svg>
<svg class="a" style="left:681px;top:904px" width="20" height="30" viewBox="0 0 20 30"><rect x="1" y="1" width="18" height="27" rx="9" fill="#4aa2d2"/><ellipse cx="8" cy="7" rx="4" ry="4" fill="#80c8ee" opacity="0.6"/></svg>
<svg class="a" style="left:715px;top:904px" width="28" height="30" viewBox="0 0 28 30"><path d="M1 6V24Q14 31 27 24V6Z" fill="#4aa2d2"/><ellipse cx="14" cy="6" rx="13" ry="5" fill="#80c8ee"/><ellipse cx="14" cy="6" rx="8" ry="3" fill="#2c78a8"/></svg>
<svg class="a" style="left:751px;top:905px" width="27" height="27" viewBox="0 0 27 27"><circle cx="13.5" cy="13.5" r="12.5" fill="#4aa2d2"/><circle cx="10" cy="9" r="5" fill="#80c8ee" opacity="0.6"/></svg>
<svg class="a" style="left:785px;top:909px" width="33" height="21" viewBox="0 0 33 21"><ellipse cx="16.5" cy="10.5" rx="15.5" ry="9" fill="#4aa2d2"/><ellipse cx="16.5" cy="9" rx="8" ry="3.5" fill="#2c78a8"/></svg>
<svg class="a" style="left:824px;top:905px" width="25" height="28" viewBox="0 0 25 28"><path d="M1 1H24V9H21L20 5H15V23H19V27H6V23H10V5H5L4 9H1Z" fill="#f4f4f4" stroke="#111" stroke-width="1.6"/></svg>
<svg class="a" style="left:857px;top:908px" width="37" height="24" viewBox="0 0 37 24"><path d="M1 18L10 9L16 11L22 4L28 8L35 3L34 16L24 23Z" fill="#a09080"/><path d="M1 18L24 23L34 16" fill="none" stroke="#6a5a50" stroke-width="1"/></svg>
<svg class="a" style="left:896px;top:903px" width="32" height="32" viewBox="0 0 32 32"><g stroke="#4a9a20" stroke-width="2" fill="none"><path d="M16 30Q14 15 6 3"/><path d="M16 30Q18 12 26 2"/><path d="M14 30Q8 18 2 14"/><path d="M18 30Q24 18 30 12"/><path d="M16 30V5"/></g><g stroke="#9ad040" stroke-width="1.3" fill="none"><path d="M12 30Q11 18 9 8"/><path d="M20 30Q21 18 23 8"/></g></svg>
<svg class="a" style="left:930px;top:904px" width="38" height="32" viewBox="0 0 38 32"><path d="M37 3Q24 2 20 6Q16 11 23 16Q30 21 25 26" stroke="#e6e6e6" stroke-width="2.6" fill="none"/><path d="M9 18Q15 15 21 17L22 29Q15 32 10 30Z" fill="#151515"/><path d="M2 21H10M3 26H10" stroke="#bbb" stroke-width="1.5"/></svg>
<svg class="a" style="left:970px;top:905px" width="30" height="30" viewBox="0 0 30 30"><path d="M2 3L24 1L28 28L8 29Z" fill="#6a9a6a"/><path d="M6 8Q14 14 12 24" stroke="#9ab0c0" stroke-width="2" fill="none"/><path d="M15 4L22 12" stroke="#3a6a3a" stroke-width="3"/></svg>
<svg class="a" style="left:1005px;top:910px" width="30" height="18" viewBox="0 0 30 18"><circle cx="7" cy="7" r="4.5" fill="#e0b030"/><circle cx="20" cy="10" r="6.5" fill="#c87030"/><path d="M14 9H26M14 12H26" stroke="#e8c090" stroke-width="1.2"/></svg>
<svg class="a" style="left:1040px;top:907px" width="32" height="26" viewBox="0 0 32 26"><path d="M1 15L15 9V18L3 23Z" fill="#2a2a2a"/><path d="M18 6L29 1L31 14L20 19Z" fill="#ddd"/><path d="M21 11L28 7L29 12L22 15Z" fill="#a06020"/></svg>
<svg class="a" style="left:1075px;top:904px" width="38" height="32" viewBox="0 0 38 32"><path d="M37 3Q24 2 20 6Q16 11 23 16Q30 21 25 26" stroke="#e6e6e6" stroke-width="2.6" fill="none"/><path d="M9 18Q15 15 21 17L22 29Q15 32 10 30Z" fill="#151515"/><path d="M2 21H10M3 26H10" stroke="#bbb" stroke-width="1.5"/></svg>
<svg class="a" style="left:1111px;top:906px" width="32" height="26" viewBox="0 0 32 26"><path d="M6 1L31 3L26 24L1 22Z" fill="#4aa2d2"/><path d="M10 8Q18 16 14 22M18 6Q26 14 22 22" stroke="#80c8ee" stroke-width="1" fill="none"/></svg>
<svg class="a" style="left:1150px;top:904px" width="38" height="32" viewBox="0 0 38 32"><path d="M37 3Q24 2 20 6Q16 11 23 16Q30 21 25 26" stroke="#e6e6e6" stroke-width="2.6" fill="none"/><path d="M9 18Q15 15 21 17L22 29Q15 32 10 30Z" fill="#151515"/><path d="M2 21H10M3 26H10" stroke="#bbb" stroke-width="1.5"/></svg>
<svg class="a" style="left:1187px;top:904px" width="38" height="32" viewBox="0 0 38 32"><path d="M37 3Q24 2 20 6Q16 11 23 16Q30 21 25 26" stroke="#e6e6e6" stroke-width="2.6" fill="none"/><path d="M9 18Q15 15 21 17L22 29Q15 32 10 30Z" fill="#151515"/><path d="M2 21H10M3 26H10" stroke="#bbb" stroke-width="1.5"/></svg>
<svg class="a" style="left:1223px;top:904px" width="38" height="32" viewBox="0 0 38 32"><path d="M37 3Q24 2 20 6Q16 11 23 16Q30 21 25 26" stroke="#e6e6e6" stroke-width="2.6" fill="none"/><path d="M9 18Q15 15 21 17L22 29Q15 32 10 30Z" fill="#151515"/><path d="M2 21H10M3 26H10" stroke="#bbb" stroke-width="1.5"/></svg>
<svg class="a" style="left:1255px;top:904px" width="28" height="28" viewBox="0 0 28 28"><circle cx="14" cy="14" r="13" fill="#4aa2d2"/><circle cx="14" cy="14" r="10" fill="none" stroke="#2c78a8" stroke-width="1.5"/><g fill="#2c78a8"><circle cx="14" cy="8" r="2.5"/><circle cx="9" cy="17" r="2.5"/><circle cx="19" cy="17" r="2.5"/></g></svg>
<svg class="a" style="left:1289px;top:909px" width="22" height="22" viewBox="0 0 22 22"><polygon points="20.0,11.0 18.0,12.9 18.8,15.5 16.1,16.1 15.5,18.8 12.9,18.0 11.0,20.0 9.1,18.0 6.5,18.8 5.9,16.1 3.2,15.5 4.0,12.9 2.0,11.0 4.0,9.1 3.2,6.5 5.9,5.9 6.5,3.2 9.1,4.0 11.0,2.0 12.9,4.0 15.5,3.2 16.1,5.9 18.8,6.5 18.0,9.1" fill="#4aa2d2"/><circle cx="11" cy="11" r="4.5" fill="none" stroke="#256a98" stroke-width="2"/><circle cx="11" cy="11" r="2.2" fill="#2c6c9a"/></svg>
<svg class="a" style="left:1302px;top:907px" width="24" height="24" viewBox="0 0 24 24"><polygon points="22.0,12.0 19.7,14.1 20.7,17.0 17.7,17.7 17.0,20.7 14.1,19.7 12.0,22.0 9.9,19.7 7.0,20.7 6.3,17.7 3.3,17.0 4.3,14.1 2.0,12.0 4.3,9.9 3.3,7.0 6.3,6.3 7.0,3.3 9.9,4.3 12.0,2.0 14.1,4.3 17.0,3.3 17.7,6.3 20.7,7.0 19.7,9.9" fill="#4aa2d2"/><circle cx="12" cy="12" r="5.0" fill="none" stroke="#256a98" stroke-width="2"/><circle cx="12" cy="12" r="2.5" fill="#2c6c9a"/></svg>
<svg class="a" style="left:1329px;top:904px" width="30" height="30" viewBox="0 0 30 30"><circle cx="15" cy="15" r="13" fill="#2a2a2a" stroke="#8a7a60" stroke-width="2"/><circle cx="15" cy="15" r="8" fill="#3a4a5a"/><circle cx="15" cy="15" r="4" fill="#111"/><circle cx="12" cy="12" r="1.5" fill="#aaa"/></svg>
<svg class="a" style="left:1361px;top:904px" width="38" height="32" viewBox="0 0 38 32"><path d="M37 3Q24 2 20 6Q16 11 23 16Q30 21 25 26" stroke="#e6e6e6" stroke-width="2.6" fill="none"/><path d="M9 18Q15 15 21 17L22 29Q15 32 10 30Z" fill="#151515"/><path d="M2 21H10M3 26H10" stroke="#bbb" stroke-width="1.5"/></svg>
<div class="t" style="left:1409px;top:913px;font-size:14.3px;color:#f0f0f0">Surface</div>
<svg class="a" style="left:1468px;top:912px" width="8" height="18" viewBox="0 0 8 18"><path d="M0 0L8 9L0 18Z" fill="#2cc040"/><path d="M0 9L8 9L0 18Z" fill="#1a8a28"/></svg>
<svg class="a" style="left:1478px;top:904px" width="32" height="30" viewBox="0 0 32 30"><path d="M2 12L18 4L30 8L30 20L14 28L2 22Z" fill="#4aa2d2" stroke="#1a3a60" stroke-width="1"/><path d="M6 16L18 10L26 12L14 18Z" fill="#80c8ee"/><path d="M2 12V22M18 4V14" stroke="#1a3a60" stroke-width="1"/></svg>
<svg class="a" style="left:1512px;top:904px" width="30" height="30" viewBox="0 0 30 30"><rect x="2" y="3" width="26" height="24" rx="6" fill="#4aa2d2"/><rect x="7" y="9" width="7" height="13" rx="3" fill="none" stroke="#fff" stroke-width="2"/><rect x="16" y="9" width="7" height="13" rx="3" fill="none" stroke="#fff" stroke-width="2"/></svg>
<svg class="a" style="left:1547px;top:906px" width="34" height="26" viewBox="0 0 34 26"><path d="M2 18Q8 6 20 4H33V12H22Q16 14 12 24Z" fill="#4aa2d2" stroke="#fff" stroke-width="1.3"/><path d="M2 18L12 24L8 26L1 22Z" fill="#2a80b8" stroke="#fff" stroke-width="1.3"/></svg>
<svg class="a" style="left:1585px;top:904px" width="26" height="32" viewBox="0 0 26 32"><path d="M2 2H24Q24 12 15 15V23Q20 25 20 29H6Q6 25 11 23V15Q2 12 2 2Z" fill="#4aa2d2"/><ellipse cx="13" cy="3" rx="11" ry="2.5" fill="#80c8ee"/></svg>
<svg class="a" style="left:1617px;top:905px" width="38" height="30" viewBox="0 0 38 30"><path d="M2 28V14Q4 4 18 2Q32 2 36 12V26" fill="#4aa2d2"/><g stroke="#fff" stroke-width="1.6" fill="none"><path d="M8 28V14Q10 7 20 6"/><path d="M16 28V14Q18 10 26 9"/><path d="M26 28V16Q27 12 34 13"/></g><path d="M10 28Q12 20 16 28" fill="#222"/></svg>
<div class="a" style="left:1313px;top:940px;width:1px;height:31px;background:#444"></div><div class="a" style="left:1314px;top:940px;width:1px;height:31px;background:#6a6a6a"></div>
<div class="a" style="left:1412px;top:940px;width:1px;height:31px;background:#444"></div><div class="a" style="left:1413px;top:940px;width:1px;height:31px;background:#6a6a6a"></div>
<div class="t" style="left:1318px;top:949px;font-size:14.3px;color:#f0f0f0">Undo</div>
<div class="a" style="left:1362px;top:950px;width:45px;height:14px;border-radius:2px;background:linear-gradient(#3e3e3e,#5a5a5a);box-shadow:inset 0 0 0 1px #222"></div>
<div class="t" style="left:1419px;top:949px;font-size:14.3px;color:#f0f0f0">Time code</div>
<div class="a" style="left:1492px;top:942px;width:166px;height:27px;border-radius:3px;background:#0a0a0a;box-shadow:inset 0 0 0 1px #333"></div>
<svg class="a" style="left:0;top:0" width="1667" height="1010"><g fill="#2fdde6" transform="matrix(1 0 -0.2126 1 203.1 0)"><rect x="1500.2" y="945.6" width="8.6" height="2.3" rx="0.6"/><rect x="1500.2" y="963.0" width="8.6" height="2.3" rx="0.6"/><rect x="1499.0" y="946.6" width="2.3" height="8.2" rx="0.6"/><rect x="1499.0" y="956.1" width="2.3" height="8.2" rx="0.6"/><rect x="1507.7" y="946.6" width="2.3" height="8.2" rx="0.6"/><rect x="1507.7" y="956.1" width="2.3" height="8.2" rx="0.6"/><rect x="1515.7" y="945.6" width="8.6" height="2.3" rx="0.6"/><rect x="1515.7" y="963.0" width="8.6" height="2.3" rx="0.6"/><rect x="1514.5" y="946.6" width="2.3" height="8.2" rx="0.6"/><rect x="1514.5" y="956.1" width="2.3" height="8.2" rx="0.6"/><rect x="1523.2" y="946.6" width="2.3" height="8.2" rx="0.6"/><rect x="1523.2" y="956.1" width="2.3" height="8.2" rx="0.6"/><circle cx="1534.5" cy="951.5" r="1.7"/><circle cx="1532.8" cy="960" r="1.7"/><rect x="1542.4" y="945.6" width="8.6" height="2.3" rx="0.6"/><rect x="1542.4" y="963.0" width="8.6" height="2.3" rx="0.6"/><rect x="1541.2" y="946.6" width="2.3" height="8.2" rx="0.6"/><rect x="1541.2" y="956.1" width="2.3" height="8.2" rx="0.6"/><rect x="1549.9" y="946.6" width="2.3" height="8.2" rx="0.6"/><rect x="1549.9" y="956.1" width="2.3" height="8.2" rx="0.6"/><rect x="1557.9" y="945.6" width="8.6" height="2.3" rx="0.6"/><rect x="1557.9" y="963.0" width="8.6" height="2.3" rx="0.6"/><rect x="1556.7" y="946.6" width="2.3" height="8.2" rx="0.6"/><rect x="1556.7" y="956.1" width="2.3" height="8.2" rx="0.6"/><rect x="1565.4" y="946.6" width="2.3" height="8.2" rx="0.6"/><rect x="1565.4" y="956.1" width="2.3" height="8.2" rx="0.6"/><circle cx="1576.7" cy="951.5" r="1.7"/><circle cx="1575.0" cy="960" r="1.7"/><rect x="1584.6" y="945.6" width="8.6" height="2.3" rx="0.6"/><rect x="1584.6" y="963.0" width="8.6" height="2.3" rx="0.6"/><rect x="1583.4" y="946.6" width="2.3" height="8.2" rx="0.6"/><rect x="1583.4" y="956.1" width="2.3" height="8.2" rx="0.6"/><rect x="1592.1" y="946.6" width="2.3" height="8.2" rx="0.6"/><rect x="1592.1" y="956.1" width="2.3" height="8.2" rx="0.6"/><rect x="1600.1" y="945.6" width="8.6" height="2.3" rx="0.6"/><rect x="1600.1" y="963.0" width="8.6" height="2.3" rx="0.6"/><rect x="1598.9" y="946.6" width="2.3" height="8.2" rx="0.6"/><rect x="1598.9" y="956.1" width="2.3" height="8.2" rx="0.6"/><rect x="1607.6" y="946.6" width="2.3" height="8.2" rx="0.6"/><rect x="1607.6" y="956.1" width="2.3" height="8.2" rx="0.6"/><circle cx="1618.9" cy="951.5" r="1.7"/><circle cx="1617.2" cy="960" r="1.7"/><rect x="1626.8" y="945.6" width="8.6" height="2.3" rx="0.6"/><rect x="1626.8" y="963.0" width="8.6" height="2.3" rx="0.6"/><rect x="1625.6" y="946.6" width="2.3" height="8.2" rx="0.6"/><rect x="1625.6" y="956.1" width="2.3" height="8.2" rx="0.6"/><rect x="1634.3" y="946.6" width="2.3" height="8.2" rx="0.6"/><rect x="1634.3" y="956.1" width="2.3" height="8.2" rx="0.6"/><rect x="1642.3" y="945.6" width="8.6" height="2.3" rx="0.6"/><rect x="1642.3" y="963.0" width="8.6" height="2.3" rx="0.6"/><rect x="1641.1" y="946.6" width="2.3" height="8.2" rx="0.6"/><rect x="1641.1" y="956.1" width="2.3" height="8.2" rx="0.6"/><rect x="1649.8" y="946.6" width="2.3" height="8.2" rx="0.6"/><rect x="1649.8" y="956.1" width="2.3" height="8.2" rx="0.6"/></g></svg>
<div class="a" style="left:8px;top:978px;width:1099px;height:24px;border-radius:4px;background:#3e3e3e;box-shadow:inset 0 0 0 1px #2a2a2a,0 1px 0 #666"></div>
<svg class="a" style="left:9px;top:978px" width="1102" height="24" viewBox="0 0 1102 24"><rect x="7.2" y="16" width="1" height="6" fill="#cfcfcf"/><rect x="12.6" y="16" width="1" height="6" fill="#cfcfcf"/><rect x="18.0" y="16" width="1" height="6" fill="#cfcfcf"/><rect x="23.4" y="16" width="1" height="6" fill="#cfcfcf"/><rect x="28.8" y="12" width="1" height="10" fill="#cfcfcf"/><rect x="34.1" y="16" width="1" height="6" fill="#cfcfcf"/><rect x="39.5" y="16" width="1" height="6" fill="#cfcfcf"/><rect x="44.9" y="16" width="1" height="6" fill="#cfcfcf"/><rect x="50.3" y="16" width="1" height="6" fill="#cfcfcf"/><rect x="55.7" y="16" width="1" height="6" fill="#cfcfcf"/><rect x="61.1" y="16" width="1" height="6" fill="#cfcfcf"/><rect x="66.5" y="16" width="1" height="6" fill="#cfcfcf"/><rect x="71.9" y="16" width="1" height="6" fill="#cfcfcf"/><rect x="77.3" y="16" width="1" height="6" fill="#cfcfcf"/><rect x="82.7" y="12" width="1" height="10" fill="#cfcfcf"/><rect x="88.0" y="16" width="1" height="6" fill="#cfcfcf"/><rect x="93.4" y="16" width="1" height="6" fill="#cfcfcf"/><rect x="98.8" y="16" width="1" height="6" fill="#cfcfcf"/><rect x="104.2" y="16" width="1" height="6" fill="#cfcfcf"/><rect x="109.6" y="16" width="1" height="6" fill="#cfcfcf"/><rect x="115.0" y="16" width="1" height="6" fill="#cfcfcf"/><rect x="120.4" y="16" width="1" height="6" fill="#cfcfcf"/><rect x="125.8" y="16" width="1" height="6" fill="#cfcfcf"/><rect x="131.2" y="16" width="1" height="6" fill="#cfcfcf"/><rect x="136.6" y="12" width="1" height="10" fill="#cfcfcf"/><rect x="141.9" y="16" width="1" height="6" fill="#cfcfcf"/><rect x="147.3" y="16" width="1" height="6" fill="#cfcfcf"/><rect x="152.7" y="16" width="1" height="6" fill="#cfcfcf"/><rect x="158.1" y="16" width="1" height="6" fill="#cfcfcf"/><rect x="163.5" y="16" width="1" height="6" fill="#cfcfcf"/><rect x="168.9" y="16" width="1" height="6" fill="#cfcfcf"/><rect x="174.3" y="16" width="1" height="6" fill="#cfcfcf"/><rect x="179.7" y="16" width="1" height="6" fill="#cfcfcf"/><rect x="185.1" y="16" width="1" height="6" fill="#cfcfcf"/><rect x="190.5" y="12" width="1" height="10" fill="#cfcfcf"/><rect x="195.8" y="16" width="1" height="6" fill="#cfcfcf"/><rect x="201.2" y="16" width="1" height="6" fill="#cfcfcf"/><rect x="206.6" y="16" width="1" height="6" fill="#cfcfcf"/><rect x="212.0" y="16" width="1" height="6" fill="#cfcfcf"/><rect x="217.4" y="16" width="1" height="6" fill="#cfcfcf"/><rect x="222.8" y="16" width="1" height="6" fill="#cfcfcf"/><rect x="228.2" y="16" width="1" height="6" fill="#cfcfcf"/><rect x="233.6" y="16" width="1" height="6" fill="#cfcfcf"/><rect x="239.0" y="16" width="1" height="6" fill="#cfcfcf"/><rect x="244.4" y="12" width="1" height="10" fill="#cfcfcf"/><rect x="249.8" y="16" width="1" height="6" fill="#cfcfcf"/><rect x="255.1" y="16" width="1" height="6" fill="#cfcfcf"/><rect x="260.5" y="16" width="1" height="6" fill="#cfcfcf"/><rect x="265.9" y="16" width="1" height="6" fill="#cfcfcf"/><rect x="271.3" y="16" width="1" height="6" fill="#cfcfcf"/><rect x="276.7" y="16" width="1" height="6" fill="#cfcfcf"/><rect x="282.1" y="16" width="1" height="6" fill="#cfcfcf"/><rect x="287.5" y="16" width="1" height="6" fill="#cfcfcf"/><rect x="292.9" y="16" width="1" height="6" fill="#cfcfcf"/><rect x="298.3" y="7" width="1" height="15" fill="#cfcfcf"/><rect x="303.6" y="16" width="1" height="6" fill="#cfcfcf"/><rect x="309.0" y="16" width="1" height="6" fill="#cfcfcf"/><rect x="314.4" y="16" width="1" height="6" fill="#cfcfcf"/><rect x="319.8" y="16" width="1" height="6" fill="#cfcfcf"/><rect x="325.2" y="16" width="1" height="6" fill="#cfcfcf"/><rect x="330.6" y="16" width="1" height="6" fill="#cfcfcf"/><rect x="336.0" y="16" width="1" height="6" fill="#cfcfcf"/><rect x="341.4" y="16" width="1" height="6" fill="#cfcfcf"/><rect x="346.8" y="16" width="1" height="6" fill="#cfcfcf"/><rect x="352.2" y="12" width="1" height="10" fill="#cfcfcf"/><rect x="357.5" y="16" width="1" height="6" fill="#cfcfcf"/><rect x="362.9" y="16" width="1" height="6" fill="#cfcfcf"/><rect x="368.3" y="16" width="1" height="6" fill="#cfcfcf"/><rect x="373.7" y="16" width="1" height="6" fill="#cfcfcf"/><rect x="379.1" y="16" width="1" height="6" fill="#cfcfcf"/><rect x="384.5" y="16" width="1" height="6" fill="#cfcfcf"/><rect x="389.9" y="16" width="1" height="6" fill="#cfcfcf"/><rect x="395.3" y="16" width="1" height="6" fill="#cfcfcf"/><rect x="400.7" y="16" width="1" height="6" fill="#cfcfcf"/><rect x="406.1" y="12" width="1" height="10" fill="#cfcfcf"/><rect x="411.4" y="16" width="1" height="6" fill="#cfcfcf"/><rect x="416.8" y="16" width="1" height="6" fill="#cfcfcf"/><rect x="422.2" y="16" width="1" height="6" fill="#cfcfcf"/><rect x="427.6" y="16" width="1" height="6" fill="#cfcfcf"/><rect x="433.0" y="16" width="1" height="6" fill="#cfcfcf"/><rect x="438.4" y="16" width="1" height="6" fill="#cfcfcf"/><rect x="443.8" y="16" width="1" height="6" fill="#cfcfcf"/><rect x="449.2" y="16" width="1" height="6" fill="#cfcfcf"/><rect x="454.6" y="16" width="1" height="6" fill="#cfcfcf"/><rect x="460.0" y="12" width="1" height="10" fill="#cfcfcf"/><rect x="465.3" y="16" width="1" height="6" fill="#cfcfcf"/><rect x="470.7" y="16" width="1" height="6" fill="#cfcfcf"/><rect x="476.1" y="16" width="1" height="6" fill="#cfcfcf"/><rect x="481.5" y="16" width="1" height="6" fill="#cfcfcf"/><rect x="486.9" y="16" width="1" height="6" fill="#cfcfcf"/><rect x="492.3" y="16" width="1" height="6" fill="#cfcfcf"/><rect x="497.7" y="16" width="1" height="6" fill="#cfcfcf"/><rect x="503.1" y="16" width="1" height="6" fill="#cfcfcf"/><rect x="508.5" y="16" width="1" height="6" fill="#cfcfcf"/><rect x="513.9" y="12" width="1" height="10" fill="#cfcfcf"/><rect x="519.2" y="16" width="1" height="6" fill="#cfcfcf"/><rect x="524.6" y="16" width="1" height="6" fill="#cfcfcf"/><rect x="530.0" y="16" width="1" height="6" fill="#cfcfcf"/><rect x="535.4" y="16" width="1" height="6" fill="#cfcfcf"/><rect x="540.8" y="16" width="1" height="6" fill="#cfcfcf"/><rect x="546.2" y="16" width="1" height="6" fill="#cfcfcf"/><rect x="551.6" y="16" width="1" height="6" fill="#cfcfcf"/><rect x="557.0" y="16" width="1" height="6" fill="#cfcfcf"/><rect x="562.4" y="16" width="1" height="6" fill="#cfcfcf"/><rect x="567.8" y="12" width="1" height="10" fill="#cfcfcf"/><rect x="573.1" y="16" width="1" height="6" fill="#cfcfcf"/><rect x="578.5" y="16" width="1" height="6" fill="#cfcfcf"/><rect x="583.9" y="16" width="1" height="6" fill="#cfcfcf"/><rect x="589.3" y="16" width="1" height="6" fill="#cfcfcf"/><rect x="594.7" y="16" width="1" height="6" fill="#cfcfcf"/><rect x="600.1" y="16" width="1" height="6" fill="#cfcfcf"/><rect x="605.5" y="16" width="1" height="6" fill="#cfcfcf"/><rect x="610.9" y="16" width="1" height="6" fill="#cfcfcf"/><rect x="616.3" y="16" width="1" height="6" fill="#cfcfcf"/><rect x="621.7" y="12" width="1" height="10" fill="#cfcfcf"/><rect x="627.0" y="16" width="1" height="6" fill="#cfcfcf"/><rect x="632.4" y="16" width="1" height="6" fill="#cfcfcf"/><rect x="637.8" y="16" width="1" height="6" fill="#cfcfcf"/><rect x="643.2" y="16" width="1" height="6" fill="#cfcfcf"/><rect x="648.6" y="16" width="1" height="6" fill="#cfcfcf"/><rect x="654.0" y="16" width="1" height="6" fill="#cfcfcf"/><rect x="659.4" y="16" width="1" height="6" fill="#cfcfcf"/><rect x="664.8" y="16" width="1" height="6" fill="#cfcfcf"/><rect x="670.2" y="16" width="1" height="6" fill="#cfcfcf"/><rect x="675.6" y="12" width="1" height="10" fill="#cfcfcf"/><rect x="681.0" y="16" width="1" height="6" fill="#cfcfcf"/><rect x="686.3" y="16" width="1" height="6" fill="#cfcfcf"/><rect x="691.7" y="16" width="1" height="6" fill="#cfcfcf"/><rect x="697.1" y="16" width="1" height="6" fill="#cfcfcf"/><rect x="702.5" y="16" width="1" height="6" fill="#cfcfcf"/><rect x="707.9" y="16" width="1" height="6" fill="#cfcfcf"/><rect x="713.3" y="16" width="1" height="6" fill="#cfcfcf"/><rect x="718.7" y="16" width="1" height="6" fill="#cfcfcf"/><rect x="724.1" y="16" width="1" height="6" fill="#cfcfcf"/><rect x="729.5" y="12" width="1" height="10" fill="#cfcfcf"/><rect x="734.9" y="16" width="1" height="6" fill="#cfcfcf"/><rect x="740.2" y="16" width="1" height="6" fill="#cfcfcf"/><rect x="745.6" y="16" width="1" height="6" fill="#cfcfcf"/><rect x="751.0" y="16" width="1" height="6" fill="#cfcfcf"/><rect x="756.4" y="16" width="1" height="6" fill="#cfcfcf"/><rect x="761.8" y="16" width="1" height="6" fill="#cfcfcf"/><rect x="767.2" y="16" width="1" height="6" fill="#cfcfcf"/><rect x="772.6" y="16" width="1" height="6" fill="#cfcfcf"/><rect x="778.0" y="16" width="1" height="6" fill="#cfcfcf"/><rect x="783.4" y="12" width="1" height="10" fill="#cfcfcf"/><rect x="788.8" y="16" width="1" height="6" fill="#cfcfcf"/><rect x="794.1" y="16" width="1" height="6" fill="#cfcfcf"/><rect x="799.5" y="16" width="1" height="6" fill="#cfcfcf"/><rect x="804.9" y="16" width="1" height="6" fill="#cfcfcf"/><rect x="810.3" y="16" width="1" height="6" fill="#cfcfcf"/><rect x="815.7" y="16" width="1" height="6" fill="#cfcfcf"/><rect x="821.1" y="16" width="1" height="6" fill="#cfcfcf"/><rect x="826.5" y="16" width="1" height="6" fill="#cfcfcf"/><rect x="831.9" y="16" width="1" height="6" fill="#cfcfcf"/><rect x="837.3" y="7" width="1" height="15" fill="#cfcfcf"/><rect x="842.6" y="16" width="1" height="6" fill="#cfcfcf"/><rect x="848.0" y="16" width="1" height="6" fill="#cfcfcf"/><rect x="853.4" y="16" width="1" height="6" fill="#cfcfcf"/><rect x="858.8" y="16" width="1" height="6" fill="#cfcfcf"/><rect x="864.2" y="16" width="1" height="6" fill="#cfcfcf"/><rect x="869.6" y="16" width="1" height="6" fill="#cfcfcf"/><rect x="875.0" y="16" width="1" height="6" fill="#cfcfcf"/><rect x="880.4" y="16" width="1" height="6" fill="#cfcfcf"/><rect x="885.8" y="16" width="1" height="6" fill="#cfcfcf"/><rect x="891.2" y="12" width="1" height="10" fill="#cfcfcf"/><rect x="896.5" y="16" width="1" height="6" fill="#cfcfcf"/><rect x="901.9" y="16" width="1" height="6" fill="#cfcfcf"/><rect x="907.3" y="16" width="1" height="6" fill="#cfcfcf"/><rect x="912.7" y="16" width="1" height="6" fill="#cfcfcf"/><rect x="918.1" y="16" width="1" height="6" fill="#cfcfcf"/><rect x="923.5" y="16" width="1" height="6" fill="#cfcfcf"/><rect x="928.9" y="16" width="1" height="6" fill="#cfcfcf"/><rect x="934.3" y="16" width="1" height="6" fill="#cfcfcf"/><rect x="939.7" y="16" width="1" height="6" fill="#cfcfcf"/><rect x="945.1" y="12" width="1" height="10" fill="#cfcfcf"/><rect x="950.5" y="16" width="1" height="6" fill="#cfcfcf"/><rect x="955.8" y="16" width="1" height="6" fill="#cfcfcf"/><rect x="961.2" y="16" width="1" height="6" fill="#cfcfcf"/><rect x="966.6" y="16" width="1" height="6" fill="#cfcfcf"/><rect x="972.0" y="16" width="1" height="6" fill="#cfcfcf"/><rect x="977.4" y="16" width="1" height="6" fill="#cfcfcf"/><rect x="982.8" y="16" width="1" height="6" fill="#cfcfcf"/><rect x="988.2" y="16" width="1" height="6" fill="#cfcfcf"/><rect x="993.6" y="16" width="1" height="6" fill="#cfcfcf"/><rect x="999.0" y="12" width="1" height="10" fill="#cfcfcf"/><rect x="1004.4" y="16" width="1" height="6" fill="#cfcfcf"/><rect x="1009.7" y="16" width="1" height="6" fill="#cfcfcf"/><rect x="1015.1" y="16" width="1" height="6" fill="#cfcfcf"/><rect x="1020.5" y="16" width="1" height="6" fill="#cfcfcf"/><rect x="1025.9" y="16" width="1" height="6" fill="#cfcfcf"/><rect x="1031.3" y="16" width="1" height="6" fill="#cfcfcf"/><rect x="1036.7" y="16" width="1" height="6" fill="#cfcfcf"/><rect x="1042.1" y="16" width="1" height="6" fill="#cfcfcf"/><rect x="1047.5" y="16" width="1" height="6" fill="#cfcfcf"/><rect x="1052.9" y="12" width="1" height="10" fill="#cfcfcf"/><rect x="1058.2" y="16" width="1" height="6" fill="#cfcfcf"/><rect x="1063.6" y="16" width="1" height="6" fill="#cfcfcf"/><rect x="1069.0" y="16" width="1" height="6" fill="#cfcfcf"/><rect x="1074.4" y="16" width="1" height="6" fill="#cfcfcf"/><rect x="1079.8" y="16" width="1" height="6" fill="#cfcfcf"/><rect x="1085.2" y="16" width="1" height="6" fill="#cfcfcf"/><rect x="1090.6" y="16" width="1" height="6" fill="#cfcfcf"/></svg>
<div class="a" style="left:551px;top:978px;width:13px;height:24px;border-radius:2px;background:linear-gradient(90deg,#9a9a9a,#cfcfcf 40%,#8a8a8a 60%,#bdbdbd);box-shadow:inset 0 0 0 1px #555"></div>
<div class="fld" style="left:1114px;top:977px;width:54px;height:24px;overflow:hidden"><i></i><span style="top:5px;left:6px;right:4px;overflow:hidden;font-size:14px">246034</span></div>
<div class="a" style="left:1175px;top:974px;width:14px;height:31px;background:linear-gradient(90deg,#6a6a6a,#8a8a8a 50%,#6a6a6a)"></div><div class="t" style="left:1177px;top:983px;font-size:14px;color:#eee">S</div>
<div class="fld" style="left:1195px;top:977px;width:54px;height:24px;overflow:hidden"><i></i><span style="top:5px;left:6px;right:4px;overflow:hidden;font-size:14px">246024</span></div>
<div class="a" style="left:1256px;top:974px;width:13px;height:31px;background:linear-gradient(90deg,#6a6a6a,#8a8a8a 50%,#6a6a6a)"></div><div class="t" style="left:1258px;top:983px;font-size:14px;color:#eee">E</div>
<div class="fld" style="left:1275px;top:977px;width:54px;height:24px;overflow:hidden"><i></i><span style="top:5px;left:6px;right:4px;overflow:hidden;font-size:14px">246044</span></div>
<div class="t" style="left:1336px;top:983px;font-size:14.3px;color:#f0f0f0">FPS</div>
<div class="fld" style="left:1372px;top:977px;width:53px;height:24px;overflow:hidden"><i></i><span style="top:5px;left:6px;right:4px;overflow:hidden;font-size:14px">30.0</span></div>
<div class="a" style="left:1435px;top:977px;width:225px;height:25px;background:#333"></div>
<div class="a" style="left:1436px;top:978px;width:31px;height:23px;background:linear-gradient(#d4d4d4,#a8a8a8);box-shadow:inset 0 0 0 1px #777"></div>
<svg class="a" style="left:1441px;top:981px" width="21" height="17" viewBox="0 0 21 17"><path d="M5 3V14M15 3L7 8.5L15 14Z" stroke="#111" stroke-width="2" fill="#111"/></svg>
<div class="a" style="left:1468px;top:978px;width:31px;height:23px;background:linear-gradient(#d4d4d4,#a8a8a8);box-shadow:inset 0 0 0 1px #777"></div>
<svg class="a" style="left:1473px;top:981px" width="21" height="17" viewBox="0 0 21 17"><path d="M15 3L6 8.5L15 14Z" fill="#111"/></svg>
<div class="a" style="left:1500px;top:978px;width:31px;height:23px;background:linear-gradient(#d4d4d4,#a8a8a8);box-shadow:inset 0 0 0 1px #777"></div>
<svg class="a" style="left:1505px;top:981px" width="21" height="17" viewBox="0 0 21 17"><rect x="6" y="4" width="9" height="9" fill="#111"/></svg>
<div class="a" style="left:1532px;top:978px;width:31px;height:23px;background:linear-gradient(#d4d4d4,#a8a8a8);box-shadow:inset 0 0 0 1px #777"></div>
<svg class="a" style="left:1537px;top:981px" width="21" height="17" viewBox="0 0 21 17"><path d="M6 3L15 8.5L6 14Z" fill="#111"/></svg>
<div class="a" style="left:1564px;top:978px;width:31px;height:23px;background:linear-gradient(#d4d4d4,#a8a8a8);box-shadow:inset 0 0 0 1px #777"></div>
<svg class="a" style="left:1569px;top:981px" width="21" height="17" viewBox="0 0 21 17"><path d="M6 5H15V12H8M10 10L7 12L10 14" stroke="#111" stroke-width="2" fill="none"/></svg>
<div class="a" style="left:1596px;top:978px;width:31px;height:23px;background:linear-gradient(#d4d4d4,#a8a8a8);box-shadow:inset 0 0 0 1px #777"></div>
<svg class="a" style="left:1601px;top:981px" width="21" height="17" viewBox="0 0 21 17"><path d="M9 3L1 8.5L9 14ZM12 3L20 8.5L12 14Z" fill="#111"/></svg>
<div class="a" style="left:1628px;top:978px;width:31px;height:23px;background:linear-gradient(#d4d4d4,#a8a8a8);box-shadow:inset 0 0 0 1px #777"></div>
<svg class="a" style="left:1633px;top:981px" width="21" height="17" viewBox="0 0 21 17"><path d="M5 3L13 8.5L5 14ZM15 3V14" stroke="#111" stroke-width="2" fill="#111"/></svg>
</body></html>
